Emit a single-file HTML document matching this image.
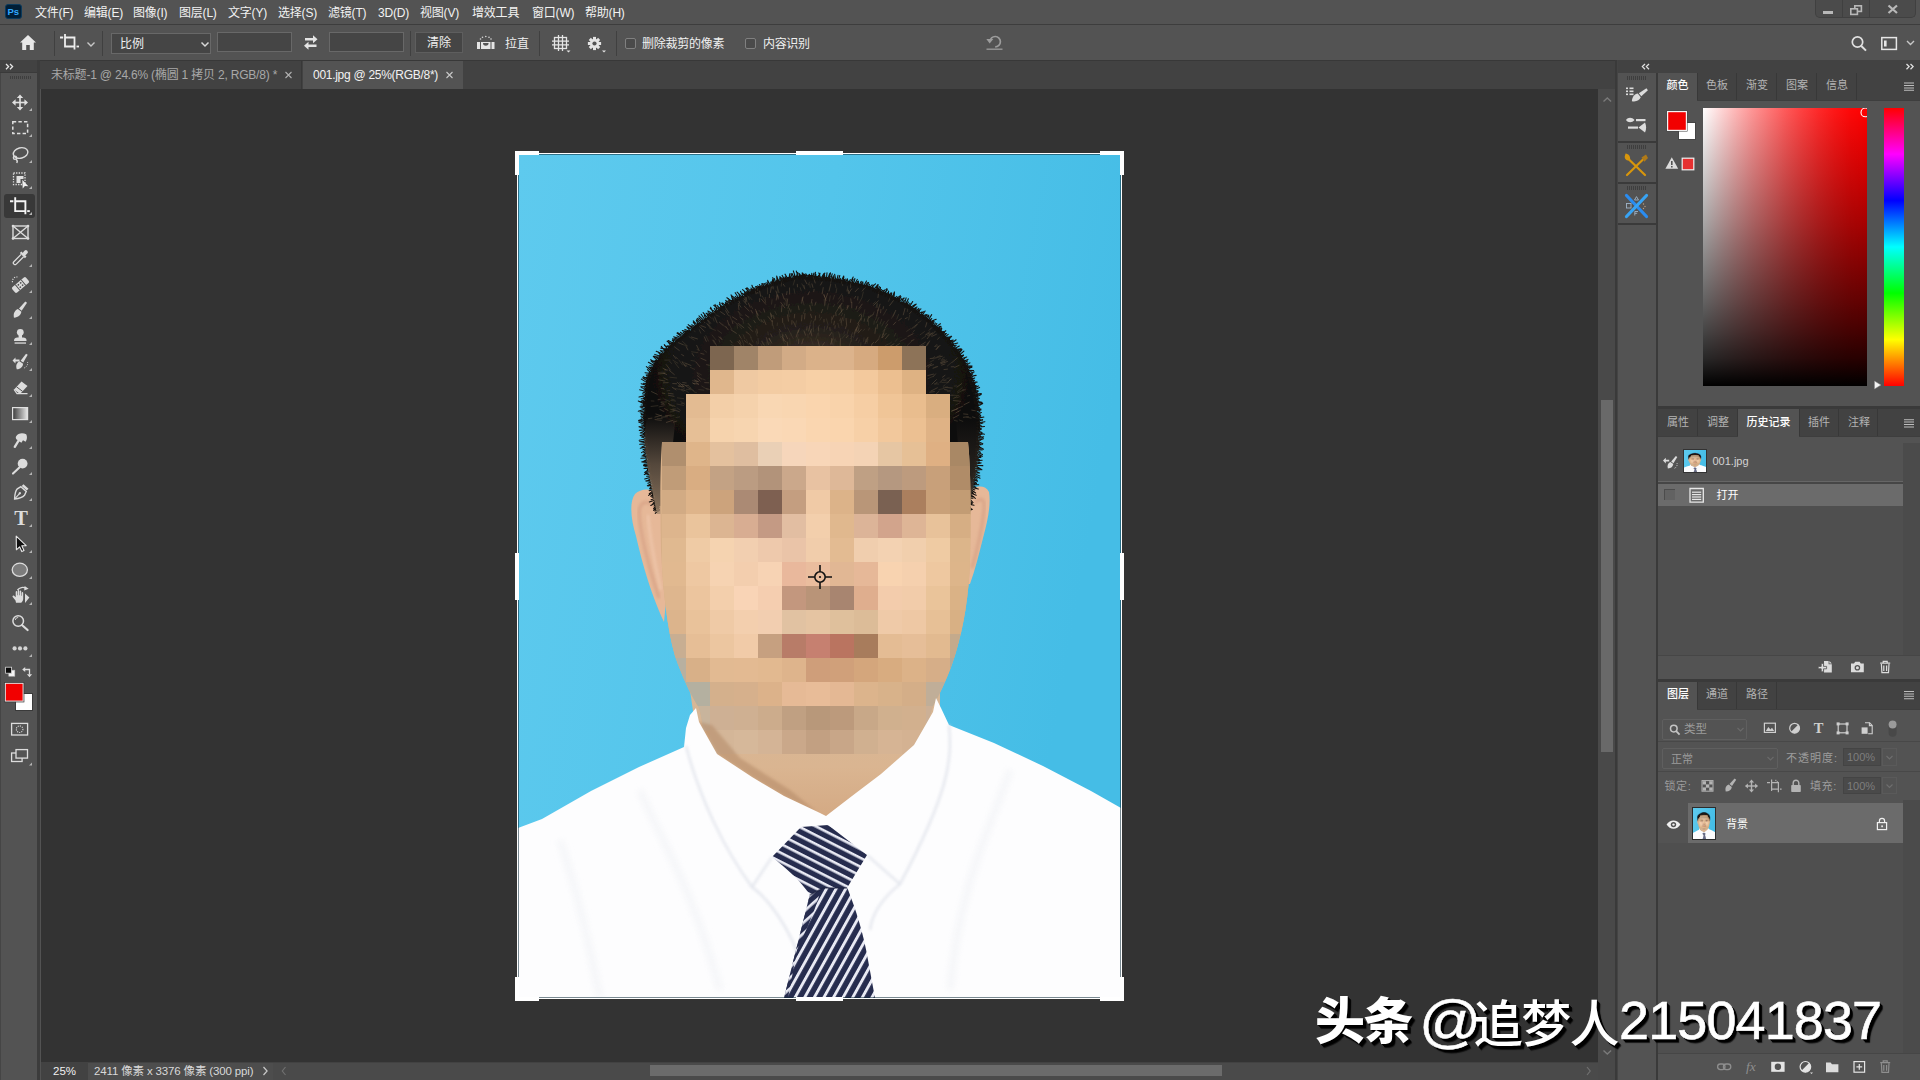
<!DOCTYPE html>
<html lang="zh-CN">
<head>
<meta charset="utf-8">
<title>Photoshop</title>
<style>
*{box-sizing:border-box;margin:0;padding:0}
html,body{width:1920px;height:1080px;overflow:hidden;background:#535353}
body{position:relative;font-family:"Liberation Sans","Noto Sans CJK SC",sans-serif;font-size:12px;color:#e6e6e6}
.abs{position:absolute}
.t{position:absolute;white-space:nowrap;line-height:16px;height:16px}
svg{position:absolute;overflow:visible}
#menubar{left:0;top:0;width:1920px;height:25px;background:#535353;border-bottom:1px solid #3d3d3d}
#menubar .t{top:4px;font-size:12px;color:#f2f2f2}
#optbar{left:0;top:25px;width:1920px;height:35px;background:#535353}
#optbar .t{font-size:12px;color:#f0f0f0}
.inp{position:absolute;background:#454545;border:1px solid #686868}
.sep{position:absolute;width:1px;background:#404040}
.cb{position:absolute;width:11px;height:11px;border:1px solid #808080;border-radius:2px;background:#4a4a4a}
#tabbar{left:40px;top:60px;width:1577px;height:29px;background:#424242;border-top:1px solid #383838}
#tabbar .t{font-size:12px;top:7px}
#toolbar{left:0;top:60px;width:40px;height:1020px;background:#535353;border-right:3px solid #3c3c3c;border-left:1px solid #454545}
#canvas{left:41px;top:89px;width:1557px;height:973px;background:#333333;overflow:hidden}
#status{left:41px;top:1062px;width:1576px;height:18px;background:#424242}
#vscroll{left:1598px;top:89px;width:18px;height:991px;background:#494949}
#rstrip{left:1617px;top:60px;width:41px;height:1020px;background:#535353}
#rpanels{left:1658px;top:60px;width:262px;height:1020px;background:#535353}
</style>
</head>
<body>

<svg width="0" height="0" style="position:absolute">
<defs>
<linearGradient id="bgblue" x1="0" y1="0" x2="1" y2="0.25">
 <stop offset="0" stop-color="#5ecaee"/><stop offset="0.5" stop-color="#53c5eb"/><stop offset="1" stop-color="#45bde6"/>
</linearGradient>
<radialGradient id="hairg" cx="0.5" cy="0.42" r="0.5">
 <stop offset="0" stop-color="#4a3c2e"/><stop offset="0.4" stop-color="#241f1a"/><stop offset="1" stop-color="#0f0f0f"/>
</radialGradient>
<linearGradient id="neckg" x1="0" y1="0" x2="0" y2="1">
 <stop offset="0" stop-color="#d6b797"/><stop offset="0.55" stop-color="#dab591"/><stop offset="1" stop-color="#d2a680"/>
</linearGradient>
<filter id="rough" x="-5%" y="-5%" width="110%" height="110%">
 <feTurbulence type="fractalNoise" baseFrequency="0.35" numOctaves="2" seed="3" result="n"/>
 <feDisplacementMap in="SourceGraphic" in2="n" scale="5" xChannelSelector="R" yChannelSelector="G"/>
</filter>
<linearGradient id="sbfadeL" x1="0" y1="0" x2="0" y2="1"><stop offset="0" stop-color="#8a7460" stop-opacity="0"/><stop offset="0.5" stop-color="#8f7862" stop-opacity="0.55"/><stop offset="1" stop-color="#a98c70" stop-opacity="0.8"/></linearGradient>
<linearGradient id="sbfadeR" x1="0" y1="0" x2="0" y2="1"><stop offset="0" stop-color="#8a7460" stop-opacity="0"/><stop offset="0.6" stop-color="#7a6450" stop-opacity="0.25"/><stop offset="1" stop-color="#a98c70" stop-opacity="0.6"/></linearGradient>
<filter id="soft"><feGaussianBlur stdDeviation="1.6"/></filter>
<filter id="soft3"><feGaussianBlur stdDeviation="3"/></filter>
<pattern id="tieA" width="20" height="8.4" patternUnits="userSpaceOnUse" patternTransform="rotate(-61 820 900)">
 <rect width="20" height="8.4" fill="#262c4e"/><rect width="20" height="2.9" fill="#e9eaf4"/>
</pattern>
<pattern id="tieB" width="20" height="7.9" patternUnits="userSpaceOnUse" patternTransform="rotate(27 820 850)">
 <rect width="20" height="7.9" fill="#262c4e"/><rect width="20" height="2.6" fill="#e9eaf4"/>
</pattern>
<pattern id="tieC" width="20" height="8" patternUnits="userSpaceOnUse" patternTransform="rotate(-42 800 940)">
 <rect width="20" height="8" fill="#262c4e"/><rect width="20" height="2.7" fill="#e9eaf4"/>
</pattern>
<clipPath id="faceclip">
 <path d="M710,346 L926,346 L926,394 L950,394 L950,442 L968,442 C971,470 971,520 970,560 C969,595 964,625 956,652 C950,672 942,690 933,706 C929,716 926,735 922,754 L706,754 C704,735 702,718 699,708 C690,694 682,676 675,656 C667,628 663,590 661,550 C660,510 660,470 662,442 L686,442 L686,394 L710,394 Z"/>
</clipPath>
<symbol id="photo" viewBox="518 154 603 844" preserveAspectRatio="none">
 <rect x="518" y="154" width="603" height="844" fill="url(#bgblue)"/>
 <!-- neck -->
 <path d="M690,690 L940,690 L940,760 L830,830 L810,830 L700,760 Z" fill="url(#neckg)"/>
 <!-- ears -->
 <path d="M664,498 C656,488 642,487 635,494 C629,502 631,520 636,536 C641,558 650,592 664,622 L670,560 Z" fill="#e6b898"/>
 <path d="M655,508 C648,499 640,501 639,512 C640,532 648,566 659,598" fill="none" stroke="#cf957c" stroke-width="3" opacity="0.55" filter="url(#soft)"/>
 <path d="M648,515 C650,540 655,565 661,590" fill="none" stroke="#f3cdb4" stroke-width="2.5" opacity="0.7" filter="url(#soft)"/>
 <path d="M966,494 C974,485 985,484 989,492 C991,504 988,520 983,538 C979,554 975,570 970,584 L962,584 Z" fill="#e6b898"/>
 <path d="M975,503 C981,496 985,499 984,510 C982,528 978,548 972,568" fill="none" stroke="#cf957c" stroke-width="3" opacity="0.55" filter="url(#soft)"/>
 <!-- hair -->
 <g filter="url(#rough)">
 <path d="M657,512 C652,490 648,470 646,455 C643,430 642,405 646,382 C650,366 660,353 675,341 C692,327 714,311 738,297 C757,287 776,279 795,276 C815,274 840,278 866,285 C890,292 912,305 929,319 C945,332 958,348 968,366 C975,380 979,400 980,424 C980,445 977,470 972,492 L967,512 L960,470 L680,470 Z" fill="url(#hairg)"/>
 </g>
 <path d="M722.3,339.9L720.1,336.6M743.0,319.9L739.6,316.9M771.7,317.1L771.1,313.7M778.2,297.6L775.8,290.6M764.0,322.9L761.0,319.6M807.8,295.1L809.5,291.5M760.8,296.7L759.3,289.7M769.3,298.0L769.5,294.1M774.1,318.6L772.6,315.3M854.1,334.3L855.9,328.7M808.6,331.4L810.2,324.7M709.7,365.3L706.2,364.6M676.4,390.1L671.8,387.0M749.4,311.2L744.1,306.0M813.0,287.7L811.8,283.5M847.2,308.2L847.4,305.2M684.5,387.2L679.3,382.6M867.3,321.7L869.0,315.8M705.9,327.5L700.6,325.5M814.9,305.5L816.1,301.8M895.4,346.3L899.8,343.4M907.6,336.6L913.4,333.6M831.7,320.0L834.1,315.0M877.9,297.9L878.9,290.6M664.0,388.5L660.9,388.6M950.8,366.8L954.4,366.7M677.0,383.8L672.4,383.5M813.7,292.1L814.1,288.9M784.3,299.5L782.1,293.3M697.8,339.0L691.0,336.9M925.4,327.3L927.0,322.1M883.3,334.9L884.6,328.8M918.8,347.2L924.4,344.8M825.7,298.8L827.8,293.0M930.2,365.7L933.9,364.6M700.4,381.5L697.6,378.4M732.9,323.9L732.0,320.2M757.3,292.4L756.9,285.8M704.3,354.3L700.4,353.3M933.2,368.2L938.1,366.4M807.1,284.2L804.4,279.2M766.0,304.6L760.9,298.6M782.7,322.9L782.5,318.1M706.4,341.7L704.2,336.5M736.7,333.5L730.7,329.6M772.2,337.1L770.5,333.6M804.5,319.3L805.0,313.0M830.1,330.9L829.8,327.2M679.7,411.8L672.4,409.3M741.2,307.5L738.1,303.1M788.5,321.5L787.5,314.5M672.7,406.3L667.9,403.2M851.7,308.2L851.8,301.9M847.0,291.4L847.5,288.4M854.9,292.0L858.6,288.1M685.0,384.8L681.3,384.5M673.4,420.2L666.0,422.5M671.5,415.0L664.9,415.9M704.9,323.0L703.4,320.3M684.1,356.0L681.3,354.3M757.4,315.7L756.0,310.8M931.5,336.5L936.8,334.1M657.6,394.5L651.1,391.4M862.0,291.4L865.7,286.6M949.3,380.4L951.8,378.7M781.4,312.2L782.0,304.8M936.8,357.4L942.6,356.2M940.7,363.8L947.8,361.4M855.9,309.7L857.0,305.8M848.6,293.2L851.9,288.6M759.5,320.5L756.7,315.6M845.3,328.9L846.3,325.9M963.0,417.3L968.8,416.7M953.2,400.5L961.0,401.3M846.7,325.8L846.0,318.0M838.3,307.8L842.1,302.8M796.1,337.3L798.5,329.8M745.4,302.6L745.1,295.4M919.0,346.3L925.7,342.0M685.7,366.9L681.9,361.7M851.3,303.0L850.7,298.4M698.9,381.6L694.7,381.1M972.2,416.8L975.5,417.9M685.3,390.7L681.2,389.3M858.8,308.6L862.4,303.8M674.4,396.4L667.9,395.2M771.9,343.4L768.9,338.3M935.8,349.8L940.3,345.1M954.3,367.6L959.4,365.2M822.4,345.6L824.7,342.2M697.9,381.6L693.9,379.7M783.7,341.4L782.3,334.2M772.3,325.7L772.3,320.1M953.3,398.4L957.2,396.7M820.3,285.4L822.3,281.7M857.5,331.6L858.9,328.5M732.4,343.2L730.1,340.2M781.0,332.0L779.3,329.1M926.4,366.4L931.9,363.5M885.2,339.0L889.0,334.3M753.5,346.7L749.3,343.0M746.9,304.8L743.2,300.4M715.2,313.2L710.0,308.7M665.2,393.6L662.0,393.0M903.2,315.2L905.1,308.1M776.2,300.4L777.0,294.5M794.3,318.3L794.7,313.9M811.8,318.1L810.4,313.8M841.7,312.4L840.3,304.9M940.8,360.1L944.8,359.8M876.9,329.1L877.6,324.2M836.2,311.8L840.3,305.2M787.8,308.5L789.3,304.0M728.8,305.4L727.6,300.0M787.8,339.1L785.4,334.1M728.6,315.8L725.5,310.3M811.2,311.1L809.7,305.0M785.6,341.9L781.7,336.3M822.1,294.2L823.3,287.2M667.7,416.7L661.1,417.2M667.7,379.9L663.4,377.8M729.1,313.0L725.2,307.2M683.1,344.7L677.8,342.4M824.0,322.3L824.0,319.0M786.5,295.0L787.1,291.2M710.3,324.1L707.4,320.2M846.0,338.0L848.3,335.2M834.9,328.7L835.2,325.3M833.7,325.2L834.5,320.8M754.3,347.4L749.0,343.5M674.9,410.8L670.4,409.3M876.6,316.2L878.3,309.2M663.9,403.6L660.8,402.6M798.5,343.8L798.8,338.7M864.1,321.7L864.6,318.5M865.0,344.0L866.4,338.6M725.0,314.8L720.2,311.5M709.7,389.5L705.8,388.4M882.0,337.9L883.0,333.4M909.2,314.1L911.6,311.4M869.0,317.9L873.8,313.9M668.3,410.6L664.3,408.5M811.9,336.3L810.7,330.6M784.9,286.6L783.1,283.9M728.4,330.1L725.4,326.0M786.7,306.0L787.7,298.6M741.4,338.7L738.9,334.6M874.9,333.7L875.6,327.5M841.0,323.1L842.6,317.5M931.6,384.4L936.7,379.3M695.1,384.3L692.1,382.7M927.4,375.7L933.9,374.0M953.0,418.2L959.3,414.9M679.6,350.7L674.1,346.6M956.7,387.3L962.1,383.3M911.1,341.0L914.3,339.5M706.4,360.7L700.5,358.1M772.4,322.0L767.9,316.3M932.8,377.1L935.8,373.6M934.8,384.7L937.4,381.9M799.2,310.1L798.2,305.5M866.4,342.1L868.0,336.9M838.5,315.2L843.4,308.9M755.5,323.1L753.7,320.3M730.6,303.7L728.0,299.5M790.6,311.7L789.2,308.1M740.0,303.8L738.7,300.6M850.5,287.7L851.2,280.8M804.8,289.2L803.7,285.0M699.1,350.4L696.5,345.0M934.4,347.0L937.0,344.3M828.9,291.4L830.8,284.0M787.8,346.4L787.2,341.7M928.8,330.6L931.9,327.5M877.6,311.3L880.2,303.8M829.2,336.1L832.0,332.1M694.0,356.4L692.0,353.2M858.0,333.2L861.5,329.2M770.3,292.9L771.4,286.9M720.3,309.3L715.7,305.6M742.2,347.0L737.6,341.1M688.0,350.2L686.0,346.2M665.3,373.3L657.8,374.0M904.8,318.8L907.6,317.5M687.3,366.3L684.2,364.6M942.2,377.4L945.3,375.1M815.2,320.4L815.6,315.6M963.2,413.9L968.2,414.4M773.6,288.6L771.9,284.0M721.7,339.5L718.5,336.7M674.6,374.8L668.8,370.0M875.0,343.1L878.8,338.8M771.6,318.8L770.3,312.5M861.0,320.6L861.6,314.5M929.3,392.3L934.8,391.6M821.2,313.0L822.8,309.1M873.3,305.6L878.6,300.6M759.7,302.0L759.5,298.3M750.3,307.5L748.2,302.7M762.2,290.0L761.5,284.8M924.9,347.9L928.3,342.4M818.7,331.4L818.4,326.7M832.1,344.7L831.4,338.1M778.3,299.4L777.8,294.6M791.8,324.6L792.0,320.1M951.4,410.8L957.5,409.1M673.5,394.0L667.9,393.2M946.8,383.5L950.8,379.0M830.4,344.5L832.8,338.4M936.2,349.6L938.8,345.8M652.3,418.1L648.0,418.7M710.2,327.7L706.7,323.4M943.6,369.6L947.9,369.1M766.1,324.9L763.8,319.4M936.0,394.1L939.4,391.0M729.2,325.7L727.3,320.1M785.0,308.1L780.6,302.2M811.3,303.4L812.0,299.0M931.2,335.6L935.5,331.0M744.2,328.0L738.3,323.3M937.3,339.5L939.6,337.3M856.0,340.8L857.6,337.7M670.6,370.4L666.0,364.3M694.2,391.4L689.7,387.6M752.8,331.6L748.2,326.7M690.2,389.1L685.4,385.5M684.2,386.5L678.3,386.5M739.1,310.0L738.3,304.6M668.5,382.6L663.0,382.8M698.7,384.0L693.1,383.5M770.9,341.4L769.0,337.9M704.6,331.5L699.3,326.2M869.9,347.3L872.6,344.7M716.5,345.5L713.3,339.8M893.0,316.5L895.9,310.0M971.4,410.1L976.7,411.0M927.4,335.7L932.9,332.9M927.0,339.0L931.8,332.8M956.4,408.9L963.0,406.1M854.2,298.6L855.9,296.0M850.3,322.8L850.9,318.8M927.9,367.6L930.5,365.3M881.6,338.1L886.5,333.1M815.3,283.3L813.2,276.5M819.5,346.7L817.6,339.2M939.8,382.8L944.0,378.4M930.7,391.2L937.7,387.6M943.4,380.4L946.5,379.9M723.3,325.6L719.0,321.9M756.1,294.2L755.1,287.9M700.0,367.0L695.6,361.6M757.1,293.6L757.6,289.7M749.3,334.3L745.9,331.7M789.6,294.5L789.5,287.6M745.0,300.2L742.4,296.9M757.5,333.5L756.7,328.8M709.3,382.8L704.3,382.6M717.3,323.2L714.5,316.6M911.4,328.9L917.1,324.2M893.1,325.1L896.0,321.8M857.6,300.3L858.0,296.3M681.8,387.0L677.0,381.9M677.2,421.0L673.0,422.2M855.8,332.6L857.1,326.9M702.2,379.4L697.0,375.4M764.0,345.0L761.6,341.3M947.2,391.1L950.5,390.9M661.3,415.9L655.5,413.9M768.6,344.8L766.2,337.2M746.9,302.2L746.2,297.0M836.1,316.1L835.7,311.9M944.9,387.3L952.7,388.1M888.2,347.4L894.3,343.6M801.7,344.2L803.3,338.7M688.8,385.4L684.8,385.4M846.6,309.9L848.9,305.2M801.5,321.3L802.0,314.7M840.2,346.3L840.5,338.3M957.9,411.9L960.6,410.1M889.4,305.8L894.0,299.8M951.3,411.5L957.7,408.4M661.7,420.4L654.7,419.5M858.9,316.3L861.0,313.6M664.2,411.6L659.5,409.3M955.7,413.1L958.5,411.2M885.0,328.1L887.9,323.8M746.6,342.7L744.1,340.3M925.1,335.2L930.2,332.7M855.7,330.7L858.9,323.6M824.7,305.5L825.7,297.8M944.2,389.5L947.6,390.0M871.1,344.7L874.0,342.1M665.1,381.1L658.1,379.7M941.2,365.3L945.4,363.9M764.7,312.5L763.6,308.5M662.1,415.2L654.6,417.2M740.9,343.9L739.4,340.1M758.3,315.6L755.2,308.9M882.9,309.4L883.6,306.3M699.0,384.7L696.2,382.7M805.6,335.5L803.9,330.6M797.5,287.2L797.3,283.9M667.0,374.7L663.2,373.0M796.0,327.2L793.3,321.4M666.2,369.8L662.7,368.2M798.0,332.8L799.5,328.4M749.2,317.6L745.2,314.7M667.9,370.1L664.2,369.8M849.2,294.0L848.4,289.9M951.8,362.6L957.7,357.6M660.6,399.2L657.6,399.8M717.7,313.1L716.3,308.2M940.2,363.0L945.3,361.0M857.5,324.2L861.1,318.2M801.7,303.5L802.5,297.3M963.6,404.9L969.6,402.0M880.5,313.2L881.0,309.1M752.8,313.4L750.9,310.0M751.2,327.2L748.0,323.2M809.4,334.4L811.7,329.1M691.4,365.7L685.3,363.1M927.0,345.8L929.8,340.6M898.4,320.7L901.7,318.2M686.6,383.0L682.3,382.5M826.2,300.8L823.8,294.6M929.8,358.6L936.7,357.8M737.2,319.9L732.1,316.7M676.3,359.0L673.0,354.9M824.8,297.4L823.8,294.2M806.6,330.4L807.1,326.3M802.2,301.2L803.2,296.5M962.3,390.2L965.7,389.7" stroke="#6a5844" stroke-width="0.9" fill="none" opacity="0.55"/><path d="M878.6,338.8L880.3,334.5M741.9,328.9L738.6,325.0M699.6,350.5L696.7,349.4M833.1,307.0L834.9,304.1M967.0,396.1L970.1,395.3M908.5,320.3L909.8,314.6M664.6,405.7L658.7,407.0M868.4,330.5L869.7,327.6M696.9,392.8L693.8,391.7M813.4,322.3L815.0,319.0M953.9,420.3L957.8,421.2M808.1,285.4L809.6,281.8M824.6,306.3L824.2,299.0M848.5,294.1L847.3,286.2M765.9,302.3L761.8,295.5M752.8,309.2L751.0,305.7M666.8,401.9L660.6,402.1M695.1,369.6L690.0,367.2M704.2,390.2L698.4,389.5M707.1,352.5L704.2,350.3M836.0,288.0L835.2,284.1M946.6,378.4L949.6,377.9M917.5,323.3L921.3,320.7M758.6,344.1L758.0,337.9M888.3,301.7L891.5,295.2M894.2,336.5L896.0,332.9M674.9,406.1L668.7,404.0M684.0,398.7L677.0,397.8M940.2,362.5L946.8,359.8M725.9,327.5L722.6,324.3M810.1,324.2L811.4,320.2M777.1,326.0L777.5,322.6M711.0,323.4L707.8,319.7M818.9,336.3L818.4,332.4M812.2,306.0L812.1,302.3M771.5,304.5L772.1,299.4M708.6,341.4L705.6,335.2M849.0,346.8L851.1,340.2M853.4,337.9L855.1,332.9M774.6,308.0L775.2,304.1M929.8,335.2L932.5,332.9M829.4,301.6L830.3,295.5M819.8,320.4L821.8,316.9M921.4,339.1L925.9,336.1M695.4,331.7L690.3,328.2M957.1,392.1L962.5,387.4M678.3,359.4L675.7,356.6M858.8,303.6L862.3,297.0M882.5,331.8L886.3,328.3M701.7,375.0L696.7,372.3M662.6,418.7L656.8,418.4M773.6,289.4L769.8,284.5M804.9,289.3L801.7,283.5M813.2,329.1L813.4,321.2M753.2,342.5L750.4,337.0M686.8,345.4L682.2,341.2M938.5,389.7L944.5,388.4M926.2,334.0L930.2,331.3M785.5,328.9L783.6,323.0M684.5,403.0L681.0,403.8M670.1,401.7L663.4,398.7M683.6,391.4L679.0,388.8M877.1,308.0L877.3,303.5M839.3,321.2L840.8,317.8M779.2,292.9L777.1,286.9M688.7,392.7L685.4,390.3M912.6,332.5L914.9,329.9M839.8,337.8L839.7,333.9M654.3,401.1L650.8,400.9M684.9,404.4L680.5,401.4M658.3,405.6L650.7,406.5M796.5,341.3L798.4,334.4M795.5,325.8L796.5,320.5M674.8,400.1L671.2,399.0M734.3,346.3L730.5,344.1M762.7,347.2L760.5,343.2M665.5,372.2L658.0,372.4M833.5,339.7L832.8,332.9M942.0,358.7L944.7,357.1M801.3,291.1L800.1,287.3M819.3,318.1L819.6,314.5M680.6,385.6L677.6,385.4M841.2,316.1L842.7,312.9M843.2,301.9L842.4,294.8M781.2,286.5L782.0,279.0M813.3,345.1L810.7,337.7M934.9,346.6L937.9,345.8M722.0,333.5L717.4,330.1M850.9,337.0L852.8,332.2M744.7,347.4L743.0,344.2M786.3,301.6L784.1,298.1M757.3,336.5L755.4,330.7M906.4,331.5L910.8,328.5M906.9,345.8L912.5,340.4M831.6,323.4L831.5,316.4M684.1,405.5L676.6,404.0M830.6,283.7L831.4,278.1M774.0,329.4L772.9,324.8M941.4,382.5L949.3,382.1M863.0,317.2L864.9,309.4M933.9,383.7L939.1,384.1M957.4,393.0L964.1,389.6M737.6,328.7L736.9,323.3M676.3,408.9L672.5,408.9M885.1,345.7L888.8,343.9M813.6,331.9L813.4,328.2M826.1,330.0L828.0,325.4M767.6,294.3L767.4,286.9M851.4,341.9L851.4,334.3M738.7,325.3L733.1,320.8M784.9,305.2L783.9,302.3M677.0,378.0L669.5,377.2M679.5,389.4L672.9,388.0M946.3,395.5L953.5,395.3M896.7,319.4L898.7,314.1M784.3,336.9L782.6,333.6M876.0,323.2L879.1,317.1M770.6,343.6L768.4,341.6M791.4,336.2L790.9,333.2M872.8,304.2L875.7,301.6M932.1,358.8L935.0,356.2M751.6,338.2L749.3,334.0M839.1,308.8L842.3,303.1M698.2,352.7L691.1,351.7M793.1,285.4L795.2,278.4M879.9,324.4L881.8,318.9M804.1,305.3L802.9,300.7M691.4,389.8L686.0,389.3M680.0,416.8L675.6,417.6M778.1,293.2L777.3,285.8M915.3,321.2L917.8,319.3M690.9,387.8L688.1,385.6M867.0,343.8L868.1,338.7M836.1,341.9L835.3,338.4M678.2,363.4L672.6,360.1M765.4,347.1L762.0,340.5M839.1,328.1L837.8,322.9M838.4,299.4L842.0,293.6M858.1,331.9L859.4,325.1M731.5,320.1L729.5,314.9M748.4,344.7L746.3,339.3M780.6,338.0L779.1,330.8M740.4,316.1L738.5,311.4M843.8,334.3L844.5,331.3M842.8,286.1L841.3,280.2M827.4,309.7L828.5,303.5M742.2,315.8L737.7,311.0M862.7,331.1L865.1,328.8M790.7,333.6L787.5,327.6M947.0,366.3L952.2,361.9M881.6,326.3L884.5,321.1M694.6,340.3L688.8,336.6M695.2,361.2L690.6,360.4M808.2,337.8L807.7,333.9M810.3,287.8L809.6,283.7M885.5,324.3L888.8,319.6M670.4,360.1L664.3,360.1M914.0,328.3L918.0,323.9M714.9,343.8L712.3,339.7M757.3,344.6L756.6,341.2M875.9,307.9L877.3,303.2M794.9,293.7L793.9,288.4M789.3,316.9L788.1,309.9M675.7,406.6L669.0,405.0M670.1,390.5L666.7,390.8M676.1,401.1L670.3,400.3M776.6,314.8L774.7,310.9M841.7,338.9L845.5,334.5M942.8,386.7L945.4,384.6M665.1,404.3L660.9,404.4M889.0,344.2L891.8,341.9M743.8,344.6L741.8,339.5M714.2,321.6L712.8,317.7M680.7,410.5L676.8,407.7M761.3,312.9L758.7,310.0M818.1,327.9L819.6,324.8M719.7,342.3L718.8,339.2M785.1,344.3L781.7,338.5M867.4,302.1L869.5,299.4M766.9,345.6L767.0,339.2M679.1,368.2L674.5,362.3M936.1,357.5L940.7,355.1M943.1,387.5L948.0,386.9M956.7,397.8L959.9,396.7M711.5,318.3L708.4,315.5M862.1,297.0L863.4,291.7M836.0,293.1L836.8,288.3M875.2,320.4L877.2,315.2M929.7,362.3L934.2,359.8M671.8,363.8L669.4,361.0M833.7,345.7L834.5,339.0M699.4,375.7L696.9,372.8M758.4,293.4L756.2,290.1M687.1,364.3L682.0,361.5M749.5,299.8L747.9,295.7M715.8,330.5L709.2,327.8M833.0,299.7L834.6,294.9M708.1,390.0L701.4,385.9M891.5,318.6L895.0,311.8M927.6,378.9L933.4,376.2M932.4,368.4L936.9,366.3M883.2,315.5L886.9,309.0M790.8,312.6L791.3,309.4M938.1,359.6L940.9,358.1M790.2,344.7L789.6,338.1M774.3,318.9L773.5,314.9M958.9,419.8L963.2,421.5M895.1,341.7L897.6,338.6M837.3,303.7L841.4,298.4M966.2,417.1L971.5,418.2M842.0,325.8L840.3,318.8M743.5,323.6L742.7,318.3M872.8,315.0L874.3,311.6M765.3,303.1L765.3,296.9M815.6,339.7L818.0,332.6M827.3,328.8L827.4,325.7M858.2,342.9L859.6,339.6M828.1,324.9L826.3,318.5M768.3,335.2L767.8,331.5M856.9,311.9L861.4,307.1M953.8,386.2L956.9,385.8M951.3,395.1L959.3,395.6M700.9,333.5L699.1,329.3M719.6,316.6L715.7,314.8M786.1,304.8L786.1,298.0M674.0,411.4L669.8,412.0M867.5,319.8L870.8,314.8M770.9,345.3L767.0,341.5M745.0,339.1L742.9,334.3M687.8,346.1L681.7,344.2M860.5,345.9L861.0,342.4M761.8,322.4L758.8,319.4M899.7,341.5L906.7,338.0M868.6,325.7L868.5,320.4M824.0,332.1L824.7,326.1M682.7,365.3L678.8,359.9M752.1,299.9L749.4,296.7M793.5,339.0L790.3,333.0M803.2,314.0L805.2,308.9M850.0,339.0L852.6,336.0M846.8,335.2L848.4,329.6M843.4,321.2L844.6,313.9M716.2,340.1L711.8,334.7M664.6,389.4L661.0,388.0M761.8,322.3L761.1,319.1M955.5,405.0L960.1,402.7M705.5,380.1L702.4,378.8M674.5,415.3L669.8,416.4M919.8,335.0L924.8,331.4M712.2,329.2L707.9,323.4M839.8,337.2L838.6,331.6M907.2,312.1L907.8,308.6M684.8,389.0L681.1,386.8M873.8,324.6L874.4,320.6M731.8,329.5L729.2,324.0M863.5,341.6L864.1,337.5M696.6,382.3L692.2,380.3" stroke="#3c342a" stroke-width="1" fill="none" opacity="0.7"/><path d="M659.4,510.2L655.3,513.3M659.5,509.5L655.0,511.1M659.1,507.8L653.6,510.3M658.0,505.3L653.7,510.3M657.6,503.8L653.6,508.6M657.4,502.4L654.1,506.0M657.6,501.8L650.8,505.5M656.8,499.7L652.9,503.4M657.2,499.4L649.3,501.9M656.8,497.8L651.1,499.8M656.7,497.4L652.0,497.3M656.3,495.7L650.7,496.1M655.3,492.5L651.5,495.7M655.2,491.4L648.6,495.4M654.7,489.6L649.3,493.8M654.9,489.3L649.1,490.7M654.6,487.6L650.0,489.0M653.6,484.9L649.7,488.5M654.0,484.9L647.9,485.9M653.4,482.4L647.4,485.7M653.3,481.3L647.9,483.2M653.2,480.7L645.9,480.9M652.4,477.7L646.6,481.1M652.4,476.9L644.7,479.0M652.2,475.9L646.6,476.3M651.9,475.1L647.0,474.3M651.5,472.1L644.3,474.6M650.8,469.9L645.4,473.4M650.4,468.2L644.7,472.5M650.8,468.5L644.0,468.5M650.6,467.3L644.9,466.7M650.4,465.4L643.5,465.6M650.2,463.6L643.9,464.4M650.0,462.8L641.8,461.9M649.7,460.4L642.7,461.9M649.1,457.9L643.0,461.8M649.4,457.9L640.9,458.2M649.2,456.9L643.6,456.2M648.9,454.3L642.0,456.0M648.3,451.8L643.0,455.2M648.4,450.6L643.8,452.7M648.0,448.8L641.5,452.6M648.0,447.5L643.0,449.8M648.0,446.6L640.2,448.2M647.5,444.3L641.9,447.1M647.7,443.9L639.7,444.3M647.4,443.1L639.7,441.5M647.2,440.2L641.3,441.8M647.1,438.8L639.2,440.3M646.7,438.9L642.0,437.1M646.6,435.3L641.5,437.0M646.5,433.9L640.2,435.6M646.4,433.3L640.8,433.0M645.9,430.2L640.3,433.0M646.0,429.6L639.3,430.4M645.7,429.7L639.1,426.7M646.0,427.0L639.0,426.7M645.9,425.9L641.3,425.0M645.8,424.9L638.7,422.0M645.8,423.3L638.6,420.4M646.0,420.5L639.9,420.8M645.9,418.2L639.1,420.2M645.8,416.6L641.3,418.1M646.0,415.4L640.9,416.3M646.0,414.2L641.3,414.5M645.8,411.8L641.0,413.5M645.9,410.5L640.1,412.0M645.9,408.8L638.2,411.2M645.9,408.8L641.0,407.6M646.0,406.3L640.1,406.8M646.0,405.1L641.0,405.0M645.9,404.8L638.3,401.0M646.4,402.3L640.0,401.5M646.5,399.8L641.7,400.8M646.8,399.0L641.2,398.8M646.6,398.7L642.1,396.3M647.1,395.1L639.0,397.0M647.3,395.0L642.4,393.8M647.5,393.5L643.0,392.3M647.7,392.0L639.6,389.8M647.5,391.3L641.4,387.4M648.2,388.2L642.2,388.0M648.4,386.5L640.8,386.8M648.5,385.9L641.2,383.7M648.8,383.9L643.4,383.2M648.5,383.6L641.4,379.1M649.0,382.3L642.7,377.8M649.6,380.7L643.4,376.6M650.6,377.8L644.1,377.4M651.1,376.7L646.6,375.9M651.7,374.4L646.1,375.0M652.3,373.6L645.0,372.8M652.0,373.9L647.4,369.6M652.6,372.4L646.4,366.7M653.1,371.0L648.8,366.8M654.4,367.8L649.1,367.2M655.0,366.3L649.7,365.8M655.5,366.2L648.4,362.3M656.1,365.4L651.2,361.2M657.3,363.7L650.7,359.7M658.6,361.0L651.5,360.7M658.6,361.8L653.3,356.3M659.8,360.2L654.8,356.3M661.3,357.6L653.8,356.4M662.1,356.7L654.8,354.4M662.1,356.9L658.2,352.2M663.9,354.4L656.2,351.3M664.3,353.9L660.3,350.6M666.1,351.5L661.1,350.7M666.3,352.3L661.3,346.4M668.5,349.6L660.8,348.1M668.5,350.4L664.3,344.7M670.7,348.1L664.5,345.6M672.0,346.6L667.6,345.7M672.0,347.5L667.9,341.6M674.0,345.6L667.1,341.2M675.3,344.4L668.3,340.6M675.8,344.3L672.3,340.2M677.8,342.0L672.5,340.1M679.0,341.1L672.6,338.7M680.2,340.2L674.4,338.0M681.5,339.0L673.6,336.8M682.4,338.6L676.8,335.7M683.2,338.2L677.0,333.0M684.7,337.0L677.7,332.6M685.7,336.2L680.4,332.3M686.9,335.4L683.3,332.5M688.2,334.3L683.8,331.3M689.8,332.3L682.3,330.6M690.8,331.8L684.9,329.4M691.1,332.1L686.9,326.9M693.0,330.3L687.4,327.0M693.8,329.9L688.2,324.7M695.6,328.0L689.3,325.6M696.6,327.4L691.7,324.8M696.9,327.5L693.3,322.1M698.6,326.3L693.3,320.9M699.0,325.9L696.3,320.2M701.0,324.5L696.7,319.6M702.4,323.4L697.2,318.3M703.7,322.4L698.8,317.9M704.9,321.5L699.0,315.8M705.7,321.0L701.2,314.3M706.3,320.4L704.4,315.2M708.4,318.9L703.1,312.6M709.0,318.4L706.9,313.8M711.6,316.2L706.1,313.2M712.9,315.2L708.1,312.7M714.2,314.3L707.8,311.0M714.0,314.6L710.6,307.3M716.5,312.6L710.3,308.6M716.9,312.8L714.3,308.4M717.6,312.3L715.0,304.4M720.4,310.5L713.8,305.4M721.4,310.1L717.0,305.3M721.3,310.1L719.7,302.4M724.4,308.1L719.4,304.4M725.0,308.0L721.7,303.2M727.0,306.7L722.5,303.0M727.2,306.8L725.4,302.5M728.9,305.8L725.7,300.4M731.2,304.0L726.3,300.9M731.3,304.4L728.4,298.5M733.8,302.6L726.9,297.7M733.5,303.0L731.1,294.9M736.3,301.2L732.0,297.7M737.8,300.3L731.6,295.8M738.7,300.0L735.3,296.3M739.6,299.5L735.2,292.7M740.0,299.3L738.9,293.9M743.0,297.8L737.1,292.1M743.5,297.9L740.5,291.2M745.9,296.5L742.4,293.3M746.0,296.7L744.2,290.8M748.7,295.2L742.6,289.7M748.9,295.4L746.5,288.1M751.5,294.0L745.8,288.5M753.0,293.4L747.2,287.9M753.5,293.4L751.0,288.1M754.7,292.9L751.9,285.2M756.7,291.9L753.9,287.7M757.5,291.6L755.6,286.5M759.9,290.4L756.5,286.5M761.4,289.7L757.7,285.9M762.2,289.5L759.4,284.5M762.5,289.2L761.9,283.6M764.5,288.5L762.9,283.5M766.3,287.7L764.3,283.6M768.0,287.1L765.7,283.2M768.2,287.1L767.7,280.4M771.1,286.2L767.7,280.8M770.6,286.2L771.2,281.3M772.4,285.7L772.6,279.5M774.8,285.2L772.8,277.6M776.5,284.7L774.3,278.5M777.2,284.4L776.7,276.0M779.6,283.8L776.8,276.4M780.1,283.5L779.9,276.5M782.3,282.9L780.7,277.3M784.7,282.1L781.9,277.9M786.1,281.7L782.1,275.4M787.1,281.5L785.2,276.7M789.0,280.8L785.0,274.1M788.5,280.7L789.8,273.7M791.5,280.2L789.7,275.0M792.9,279.8L791.0,273.7M794.7,279.2L792.1,273.5M796.0,278.8L793.3,270.9M795.5,278.9L797.7,272.6M798.9,279.0L796.3,271.1M800.2,279.2L798.8,273.4M802.5,278.9L799.5,273.7M802.8,279.4L802.2,272.9M804.9,279.3L802.9,273.2M806.9,279.2L804.3,274.3M808.2,279.4L805.8,273.8M809.8,279.5L807.8,275.3M810.6,279.8L809.5,274.4M811.3,279.9L811.8,273.3M812.3,279.9L813.9,273.0M813.9,280.0L815.5,272.2M816.2,280.2L815.8,274.4M816.1,279.9L818.5,275.4M818.3,280.2L820.0,273.4M821.5,280.2L818.8,272.9M820.8,280.2L823.6,273.8M822.7,280.5L824.8,273.0M825.7,280.6L824.1,274.2M826.2,280.7L827.0,272.9M826.9,280.6L829.8,273.4M828.9,280.9L830.5,272.9M830.1,280.9L832.2,273.9M832.8,281.3L832.3,276.7M834.6,281.6L833.5,275.7M836.2,281.9L834.6,274.2M836.4,282.1L838.0,275.3M837.8,282.4L839.8,275.5M839.6,282.8L840.4,278.3M840.3,282.8L843.7,276.1M842.6,283.4L843.9,276.9M843.6,283.5L845.3,279.1M844.9,283.8L847.3,278.8M848.2,284.3L847.4,278.8M847.9,284.4L850.3,279.6M849.4,284.6L853.2,277.1M851.5,285.2L853.1,279.3M853.1,285.5L854.9,278.5M853.8,285.5L857.3,279.4M855.6,285.9L857.6,281.5M858.4,286.5L858.4,281.0M858.4,286.4L861.3,281.4M860.3,286.9L862.0,282.7M863.1,287.4L862.8,281.8M863.0,287.3L866.5,281.0M864.5,287.6L867.3,282.7M866.3,288.4L868.6,282.5M867.8,289.0L869.5,284.3M868.2,289.0L871.7,285.1M869.4,289.4L875.5,283.8M873.1,291.0L872.9,284.7M872.5,290.9L877.9,284.5M874.7,292.0L876.8,286.8M876.7,292.8L878.1,284.6M878.0,293.3L879.3,286.6M879.6,294.0L880.5,287.4M879.1,293.5L883.0,290.3M880.7,294.4L885.2,289.6M882.0,294.8L887.4,289.9M884.9,296.3L886.9,288.5M885.6,296.6L887.8,292.6M888.2,297.6L888.6,291.1M888.4,297.9L891.0,292.8M890.6,298.7L891.8,293.0M891.5,299.2L894.4,291.9M893.7,300.0L894.5,292.5M893.1,299.5L896.9,296.3M894.4,299.9L900.4,295.7M895.8,300.6L900.4,297.2M898.2,302.1L901.0,296.7M898.4,301.5L904.3,298.1M900.9,303.5L903.8,298.0M902.3,304.5L904.2,300.2M904.0,305.5L906.1,297.9M904.8,306.2L908.4,298.7M906.1,307.1L908.4,302.0M906.8,307.5L910.0,303.4M908.3,308.6L912.7,301.5M908.6,308.5L915.2,304.4M910.3,309.9L916.2,304.2M911.1,310.0L917.0,306.9M912.6,311.4L916.3,308.5M913.9,312.2L918.9,308.4M915.1,313.0L920.9,308.9M917.3,314.7L919.7,310.6M917.4,314.2L921.9,312.1M919.4,316.1L923.3,311.7M921.0,317.2L925.1,311.0M921.1,316.6L926.3,314.6M922.8,318.2L927.3,314.8M924.2,319.3L928.8,315.2M926.3,320.8L928.8,316.3M927.4,321.6L931.7,314.6M927.9,322.1L931.8,318.5M928.3,322.3L936.2,319.2M930.0,324.4L933.6,320.8M931.6,325.9L934.2,321.8M932.3,326.7L935.5,323.0M933.5,328.0L936.8,323.5M933.9,328.4L940.4,323.7M934.7,329.1L940.2,326.3M936.2,330.9L941.0,326.4M937.3,332.0L941.5,327.9M939.0,333.6L941.8,328.7M938.6,332.8L943.5,331.6M940.2,335.0L945.8,330.8M940.8,335.2L945.9,333.6M942.6,337.6L946.4,333.5M943.4,338.4L948.2,334.3M943.8,338.1L951.6,336.6M944.9,339.4L949.4,338.2M947.3,342.3L951.2,336.1M947.0,341.5L953.2,340.1M948.3,343.3L952.3,341.2M949.6,344.8L956.1,339.8M950.0,345.0L957.7,343.0M950.8,345.9L956.3,345.3M952.8,349.1L956.0,345.2M952.9,349.5L959.3,346.1M953.5,349.7L960.8,348.9M954.5,351.7L961.6,349.0M955.6,353.5L961.4,350.1M957.2,355.6L962.0,349.6M957.7,356.5L963.9,351.1M958.1,356.8L963.5,354.9M959.7,359.2L963.5,355.3M959.8,359.3L966.7,357.0M961.4,361.7L964.8,358.4M961.7,362.1L968.0,359.4M962.7,363.7L967.4,361.0M963.4,364.4L967.7,363.0M964.6,366.4L969.9,362.9M965.0,365.9L972.1,366.1M965.4,367.6L971.8,367.4M966.4,370.7L970.9,367.5M966.3,370.3L973.6,370.6M967.1,373.4L971.1,371.1M967.3,374.4L974.1,371.9M967.8,376.0L972.8,373.8M968.0,376.8L976.1,375.4M968.8,379.4L972.8,376.9M969.1,380.6L974.7,377.9M969.2,381.1L974.5,380.4M969.6,382.3L977.1,382.1M970.2,384.5L975.3,383.1M970.5,384.7L976.2,385.6M970.9,386.6L976.3,386.7M971.7,389.6L978.3,385.9M972.0,390.8L979.6,387.4M972.2,391.8L977.3,390.5M972.9,393.9L978.4,391.1M973.0,394.2L981.3,393.6M973.6,397.0L978.9,394.0M973.7,398.3L981.2,394.6M974.0,400.0L978.1,397.7M974.3,401.6L979.4,398.3M974.1,400.9L981.9,402.4M974.2,402.9L982.7,403.3M974.5,403.8L980.1,405.2M974.9,407.2L982.4,403.8M974.8,407.2L979.4,407.6M975.0,408.9L981.0,409.1M975.3,411.2L981.0,409.9M975.6,413.2L979.8,411.4M975.7,414.4L981.4,412.6M976.0,414.1L980.7,415.6M976.2,415.5L981.2,417.3M976.3,418.6L983.9,417.0M976.5,418.8L982.5,420.2M976.9,422.3L982.6,419.5M976.8,423.0L984.9,421.7M977.1,424.9L982.8,423.1M977.1,424.5L981.5,426.0M976.9,427.3L984.6,426.5M976.9,427.8L981.4,428.9M977.0,431.2L981.3,429.3M976.9,430.4L982.0,432.5M976.7,432.3L984.5,434.2M976.5,434.9L982.1,434.2M976.7,434.7L983.0,437.7M976.4,438.0L983.7,436.8M976.3,439.3L981.9,438.7M976.4,441.6L983.4,438.8M976.4,440.7L982.8,443.7M976.4,442.1L980.5,444.2M976.0,445.4L982.4,444.5M976.3,445.1L983.5,449.2M975.8,448.1L981.3,448.1M975.6,449.5L982.1,449.9M975.9,449.8L980.4,452.3M975.6,451.6L982.5,454.6M975.5,453.1L982.4,456.3M975.2,455.2L980.8,456.6M975.0,457.5L980.9,457.5M975.1,457.8L979.5,459.8M974.8,460.9L982.2,460.2M974.6,462.3L979.4,462.1M974.6,464.4L981.1,462.9M974.4,465.2L982.8,465.6M974.7,465.3L981.9,469.8M974.1,468.4L979.0,468.5M974.0,470.4L980.5,469.6M973.9,470.2L979.6,472.9M973.3,472.9L979.5,473.0M973.2,473.3L979.9,475.9M973.0,474.4L980.0,478.2M972.6,476.1L977.1,478.2M972.5,477.1L977.2,480.3M971.9,479.2L977.5,481.3M971.7,480.2L976.3,482.9M971.0,482.9L976.5,483.4M970.7,484.6L978.7,484.7M970.6,485.0L975.9,487.2M970.1,486.9L978.3,489.0M969.9,488.0L974.9,489.9M969.9,488.7L975.6,493.0M969.9,489.8L973.3,493.4M968.9,492.5L976.2,495.2M969.1,493.2L975.3,498.4M968.1,496.7L973.8,496.6M967.8,498.0L973.0,498.3M968.5,497.5L973.0,502.5M968.1,499.1L972.2,503.4M967.7,500.7L972.2,505.0M966.6,503.6L974.0,505.3M967.3,503.6L970.5,507.3M966.4,505.8L972.3,509.4M965.7,508.3L971.5,509.6M965.3,510.0L970.6,510.8" stroke="#15120f" stroke-width="1.1" fill="none" stroke-linecap="round"/>
 <path d="M647,415 L644,440 L646,455 L648,470 L652,490 L657,514 L666,514 L670,470 L676,415 Z" fill="url(#sbfadeL)"/>
 <path d="M977,420 L980,440 L977,470 L972,492 L968,520 L960,520 L960,470 L956,420 Z" fill="url(#sbfadeR)"/>
 <!-- face base -->
 <path d="M662,442 L968,442 C971,470 971,520 970,560 C969,595 964,625 956,652 C950,672 942,690 933,706 C929,716 926,735 922,754 L706,754 C704,735 702,718 699,708 C690,694 682,676 675,656 C667,628 663,590 661,550 C660,510 660,470 662,442 Z" fill="#d8b088"/>
 <!-- mosaic -->
 <g clip-path="url(#faceclip)">
 <rect x="710" y="346" width="24.5" height="24.5" fill="#7d6650"/>
<rect x="734" y="346" width="24.5" height="24.5" fill="#a08468"/>
<rect x="758" y="346" width="24.5" height="24.5" fill="#c09c7a"/>
<rect x="782" y="346" width="24.5" height="24.5" fill="#d2ab86"/>
<rect x="806" y="346" width="24.5" height="24.5" fill="#dbb28a"/>
<rect x="830" y="346" width="24.5" height="24.5" fill="#dcb38c"/>
<rect x="854" y="346" width="24.5" height="24.5" fill="#d6aa80"/>
<rect x="878" y="346" width="24.5" height="24.5" fill="#cc9c6c"/>
<rect x="902" y="346" width="24.5" height="24.5" fill="#8d7358"/>
<rect x="710" y="370" width="24.5" height="24.5" fill="#e0b78d"/>
<rect x="734" y="370" width="24.5" height="24.5" fill="#efc9a2"/>
<rect x="758" y="370" width="24.5" height="24.5" fill="#f3cca3"/>
<rect x="782" y="370" width="24.5" height="24.5" fill="#f4cda4"/>
<rect x="806" y="370" width="24.5" height="24.5" fill="#f7d0a6"/>
<rect x="830" y="370" width="24.5" height="24.5" fill="#f6cfa5"/>
<rect x="854" y="370" width="24.5" height="24.5" fill="#f3c99d"/>
<rect x="878" y="370" width="24.5" height="24.5" fill="#ecbf90"/>
<rect x="902" y="370" width="24.5" height="24.5" fill="#deb283"/>
<rect x="686" y="394" width="24.5" height="24.5" fill="#e3bb92"/>
<rect x="710" y="394" width="24.5" height="24.5" fill="#f3cfa8"/>
<rect x="734" y="394" width="24.5" height="24.5" fill="#f5d2ac"/>
<rect x="758" y="394" width="24.5" height="24.5" fill="#f9d7b3"/>
<rect x="782" y="394" width="24.5" height="24.5" fill="#f9d6b1"/>
<rect x="806" y="394" width="24.5" height="24.5" fill="#fad5ae"/>
<rect x="830" y="394" width="24.5" height="24.5" fill="#f9d3ab"/>
<rect x="854" y="394" width="24.5" height="24.5" fill="#f6cea4"/>
<rect x="878" y="394" width="24.5" height="24.5" fill="#f0c597"/>
<rect x="902" y="394" width="24.5" height="24.5" fill="#e9bd8e"/>
<rect x="926" y="394" width="24.5" height="24.5" fill="#d9ae80"/>
<rect x="686" y="418" width="24.5" height="24.5" fill="#e6bf96"/>
<rect x="710" y="418" width="24.5" height="24.5" fill="#f6d3ad"/>
<rect x="734" y="418" width="24.5" height="24.5" fill="#f7d5b0"/>
<rect x="758" y="418" width="24.5" height="24.5" fill="#fad9b7"/>
<rect x="782" y="418" width="24.5" height="24.5" fill="#fad8b5"/>
<rect x="806" y="418" width="24.5" height="24.5" fill="#fad6b0"/>
<rect x="830" y="418" width="24.5" height="24.5" fill="#fad5ae"/>
<rect x="854" y="418" width="24.5" height="24.5" fill="#f7d0a7"/>
<rect x="878" y="418" width="24.5" height="24.5" fill="#f2c89c"/>
<rect x="902" y="418" width="24.5" height="24.5" fill="#ecc092"/>
<rect x="926" y="418" width="24.5" height="24.5" fill="#dfb285"/>
<rect x="662" y="442" width="24.5" height="24.5" fill="#b08f6e"/>
<rect x="686" y="442" width="24.5" height="24.5" fill="#dfb58a"/>
<rect x="710" y="442" width="24.5" height="24.5" fill="#e4c19e"/>
<rect x="734" y="442" width="24.5" height="24.5" fill="#dfbea0"/>
<rect x="758" y="442" width="24.5" height="24.5" fill="#ead0b6"/>
<rect x="782" y="442" width="24.5" height="24.5" fill="#f6d6bb"/>
<rect x="806" y="442" width="24.5" height="24.5" fill="#f8d6b8"/>
<rect x="830" y="442" width="24.5" height="24.5" fill="#f7d4b5"/>
<rect x="854" y="442" width="24.5" height="24.5" fill="#f4d3b5"/>
<rect x="878" y="442" width="24.5" height="24.5" fill="#e6c6a3"/>
<rect x="902" y="442" width="24.5" height="24.5" fill="#e6c096"/>
<rect x="926" y="442" width="24.5" height="24.5" fill="#dfb083"/>
<rect x="950" y="442" width="24.5" height="24.5" fill="#a98865"/>
<rect x="662" y="466" width="24.5" height="24.5" fill="#c09c78"/>
<rect x="686" y="466" width="24.5" height="24.5" fill="#d9ad82"/>
<rect x="710" y="466" width="24.5" height="24.5" fill="#c3a284"/>
<rect x="734" y="466" width="24.5" height="24.5" fill="#bb9c82"/>
<rect x="758" y="466" width="24.5" height="24.5" fill="#b2937a"/>
<rect x="782" y="466" width="24.5" height="24.5" fill="#cba88b"/>
<rect x="806" y="466" width="24.5" height="24.5" fill="#e8c2a2"/>
<rect x="830" y="466" width="24.5" height="24.5" fill="#deb898"/>
<rect x="854" y="466" width="24.5" height="24.5" fill="#bfa084"/>
<rect x="878" y="466" width="24.5" height="24.5" fill="#b59880"/>
<rect x="902" y="466" width="24.5" height="24.5" fill="#bd9b7e"/>
<rect x="926" y="466" width="24.5" height="24.5" fill="#c8a07a"/>
<rect x="950" y="466" width="24.5" height="24.5" fill="#b08c68"/>
<rect x="662" y="490" width="24.5" height="24.5" fill="#d2ab84"/>
<rect x="686" y="490" width="24.5" height="24.5" fill="#deb48a"/>
<rect x="710" y="490" width="24.5" height="24.5" fill="#cca37c"/>
<rect x="734" y="490" width="24.5" height="24.5" fill="#ab8a74"/>
<rect x="758" y="490" width="24.5" height="24.5" fill="#7e6051"/>
<rect x="782" y="490" width="24.5" height="24.5" fill="#c49e80"/>
<rect x="806" y="490" width="24.5" height="24.5" fill="#f0caa6"/>
<rect x="830" y="490" width="24.5" height="24.5" fill="#dcb389"/>
<rect x="854" y="490" width="24.5" height="24.5" fill="#b99678"/>
<rect x="878" y="490" width="24.5" height="24.5" fill="#7a6152"/>
<rect x="902" y="490" width="24.5" height="24.5" fill="#ab7f5e"/>
<rect x="926" y="490" width="24.5" height="24.5" fill="#c9a078"/>
<rect x="950" y="490" width="24.5" height="24.5" fill="#c29c74"/>
<rect x="662" y="514" width="24.5" height="24.5" fill="#ddb58d"/>
<rect x="686" y="514" width="24.5" height="24.5" fill="#eac49c"/>
<rect x="710" y="514" width="24.5" height="24.5" fill="#dcb592"/>
<rect x="734" y="514" width="24.5" height="24.5" fill="#d8ad92"/>
<rect x="758" y="514" width="24.5" height="24.5" fill="#c49a84"/>
<rect x="782" y="514" width="24.5" height="24.5" fill="#e2bea2"/>
<rect x="806" y="514" width="24.5" height="24.5" fill="#f3cfac"/>
<rect x="830" y="514" width="24.5" height="24.5" fill="#e0b88e"/>
<rect x="854" y="514" width="24.5" height="24.5" fill="#dcb498"/>
<rect x="878" y="514" width="24.5" height="24.5" fill="#d2a48c"/>
<rect x="902" y="514" width="24.5" height="24.5" fill="#deb596"/>
<rect x="926" y="514" width="24.5" height="24.5" fill="#e8c29a"/>
<rect x="950" y="514" width="24.5" height="24.5" fill="#d6ae84"/>
<rect x="662" y="538" width="24.5" height="24.5" fill="#e0b990"/>
<rect x="686" y="538" width="24.5" height="24.5" fill="#efcba5"/>
<rect x="710" y="538" width="24.5" height="24.5" fill="#f5d3b0"/>
<rect x="734" y="538" width="24.5" height="24.5" fill="#f2cfb0"/>
<rect x="758" y="538" width="24.5" height="24.5" fill="#eec9ac"/>
<rect x="782" y="538" width="24.5" height="24.5" fill="#eac4a8"/>
<rect x="806" y="538" width="24.5" height="24.5" fill="#f1cdab"/>
<rect x="830" y="538" width="24.5" height="24.5" fill="#e3bb92"/>
<rect x="854" y="538" width="24.5" height="24.5" fill="#f0ceae"/>
<rect x="878" y="538" width="24.5" height="24.5" fill="#f3d2b2"/>
<rect x="902" y="538" width="24.5" height="24.5" fill="#f1cfad"/>
<rect x="926" y="538" width="24.5" height="24.5" fill="#efcba3"/>
<rect x="950" y="538" width="24.5" height="24.5" fill="#dcb58a"/>
<rect x="662" y="562" width="24.5" height="24.5" fill="#e1b990"/>
<rect x="686" y="562" width="24.5" height="24.5" fill="#eec8a2"/>
<rect x="710" y="562" width="24.5" height="24.5" fill="#f6d3b2"/>
<rect x="734" y="562" width="24.5" height="24.5" fill="#f3ceae"/>
<rect x="758" y="562" width="24.5" height="24.5" fill="#f7d3b4"/>
<rect x="782" y="562" width="24.5" height="24.5" fill="#e9b89c"/>
<rect x="806" y="562" width="24.5" height="24.5" fill="#eabd9e"/>
<rect x="830" y="562" width="24.5" height="24.5" fill="#e1b794"/>
<rect x="854" y="562" width="24.5" height="24.5" fill="#e6b898"/>
<rect x="878" y="562" width="24.5" height="24.5" fill="#f8d3b0"/>
<rect x="902" y="562" width="24.5" height="24.5" fill="#f5d0ae"/>
<rect x="926" y="562" width="24.5" height="24.5" fill="#eec8a0"/>
<rect x="950" y="562" width="24.5" height="24.5" fill="#ddb58a"/>
<rect x="662" y="586" width="24.5" height="24.5" fill="#deb68e"/>
<rect x="686" y="586" width="24.5" height="24.5" fill="#ecc59e"/>
<rect x="710" y="586" width="24.5" height="24.5" fill="#f3cfac"/>
<rect x="734" y="586" width="24.5" height="24.5" fill="#f9d4b6"/>
<rect x="758" y="586" width="24.5" height="24.5" fill="#f5ceb0"/>
<rect x="782" y="586" width="24.5" height="24.5" fill="#c3977e"/>
<rect x="806" y="586" width="24.5" height="24.5" fill="#b99478"/>
<rect x="830" y="586" width="24.5" height="24.5" fill="#a88570"/>
<rect x="854" y="586" width="24.5" height="24.5" fill="#dfae8e"/>
<rect x="878" y="586" width="24.5" height="24.5" fill="#f3ccac"/>
<rect x="902" y="586" width="24.5" height="24.5" fill="#f2ccaa"/>
<rect x="926" y="586" width="24.5" height="24.5" fill="#eac49a"/>
<rect x="950" y="586" width="24.5" height="24.5" fill="#dab286"/>
<rect x="662" y="610" width="24.5" height="24.5" fill="#dcb48c"/>
<rect x="686" y="610" width="24.5" height="24.5" fill="#e9c29a"/>
<rect x="710" y="610" width="24.5" height="24.5" fill="#efcaa6"/>
<rect x="734" y="610" width="24.5" height="24.5" fill="#f3cfae"/>
<rect x="758" y="610" width="24.5" height="24.5" fill="#f2ceb0"/>
<rect x="782" y="610" width="24.5" height="24.5" fill="#e1c2a2"/>
<rect x="806" y="610" width="24.5" height="24.5" fill="#e5c4a2"/>
<rect x="830" y="610" width="24.5" height="24.5" fill="#dfc09c"/>
<rect x="854" y="610" width="24.5" height="24.5" fill="#dcbc98"/>
<rect x="878" y="610" width="24.5" height="24.5" fill="#efcaa8"/>
<rect x="902" y="610" width="24.5" height="24.5" fill="#eec8a4"/>
<rect x="926" y="610" width="24.5" height="24.5" fill="#e7c096"/>
<rect x="950" y="610" width="24.5" height="24.5" fill="#d8b084"/>
<rect x="662" y="634" width="24.5" height="24.5" fill="#c8ae92"/>
<rect x="686" y="634" width="24.5" height="24.5" fill="#e6be96"/>
<rect x="710" y="634" width="24.5" height="24.5" fill="#ecc6a0"/>
<rect x="734" y="634" width="24.5" height="24.5" fill="#f1cba8"/>
<rect x="758" y="634" width="24.5" height="24.5" fill="#c6a080"/>
<rect x="782" y="634" width="24.5" height="24.5" fill="#b87c68"/>
<rect x="806" y="634" width="24.5" height="24.5" fill="#c68070"/>
<rect x="830" y="634" width="24.5" height="24.5" fill="#ba7460"/>
<rect x="854" y="634" width="24.5" height="24.5" fill="#a87c5c"/>
<rect x="878" y="634" width="24.5" height="24.5" fill="#e4bc94"/>
<rect x="902" y="634" width="24.5" height="24.5" fill="#e6be98"/>
<rect x="926" y="634" width="24.5" height="24.5" fill="#e2ba90"/>
<rect x="950" y="634" width="24.5" height="24.5" fill="#c4aa8c"/>
<rect x="662" y="658" width="24.5" height="24.5" fill="#b8b0a0"/>
<rect x="686" y="658" width="24.5" height="24.5" fill="#d8b088"/>
<rect x="710" y="658" width="24.5" height="24.5" fill="#e2ba92"/>
<rect x="734" y="658" width="24.5" height="24.5" fill="#e3ba92"/>
<rect x="758" y="658" width="24.5" height="24.5" fill="#e2b990"/>
<rect x="782" y="658" width="24.5" height="24.5" fill="#deb48c"/>
<rect x="806" y="658" width="24.5" height="24.5" fill="#cf9e7a"/>
<rect x="830" y="658" width="24.5" height="24.5" fill="#d0a07a"/>
<rect x="854" y="658" width="24.5" height="24.5" fill="#d4a67c"/>
<rect x="878" y="658" width="24.5" height="24.5" fill="#d8ac80"/>
<rect x="902" y="658" width="24.5" height="24.5" fill="#dcb288"/>
<rect x="926" y="658" width="24.5" height="24.5" fill="#d6ae88"/>
<rect x="950" y="658" width="24.5" height="24.5" fill="#b4aa98"/>
<rect x="686" y="682" width="24.5" height="24.5" fill="#b4b0a0"/>
<rect x="710" y="682" width="24.5" height="24.5" fill="#d4b08c"/>
<rect x="734" y="682" width="24.5" height="24.5" fill="#d6b08c"/>
<rect x="758" y="682" width="24.5" height="24.5" fill="#dcb28a"/>
<rect x="782" y="682" width="24.5" height="24.5" fill="#e6ba96"/>
<rect x="806" y="682" width="24.5" height="24.5" fill="#e8bc98"/>
<rect x="830" y="682" width="24.5" height="24.5" fill="#e4b894"/>
<rect x="854" y="682" width="24.5" height="24.5" fill="#dcb48c"/>
<rect x="878" y="682" width="24.5" height="24.5" fill="#d8b28a"/>
<rect x="902" y="682" width="24.5" height="24.5" fill="#d4ae88"/>
<rect x="926" y="682" width="24.5" height="24.5" fill="#c0ae98"/>
<rect x="686" y="706" width="24.5" height="24.5" fill="#c8b49c"/>
<rect x="710" y="706" width="24.5" height="24.5" fill="#ceb094"/>
<rect x="734" y="706" width="24.5" height="24.5" fill="#cfb092"/>
<rect x="758" y="706" width="24.5" height="24.5" fill="#ccac8c"/>
<rect x="782" y="706" width="24.5" height="24.5" fill="#c0a082"/>
<rect x="806" y="706" width="24.5" height="24.5" fill="#b8987a"/>
<rect x="830" y="706" width="24.5" height="24.5" fill="#bc9a7c"/>
<rect x="854" y="706" width="24.5" height="24.5" fill="#c8a888"/>
<rect x="878" y="706" width="24.5" height="24.5" fill="#d0b08e"/>
<rect x="902" y="706" width="24.5" height="24.5" fill="#d2b08e"/>
<rect x="926" y="706" width="24.5" height="24.5" fill="#ccb096"/>
<rect x="710" y="730" width="24.5" height="24.5" fill="#d4b698"/>
<rect x="734" y="730" width="24.5" height="24.5" fill="#d6b89a"/>
<rect x="758" y="730" width="24.5" height="24.5" fill="#d4b496"/>
<rect x="782" y="730" width="24.5" height="24.5" fill="#caa88a"/>
<rect x="806" y="730" width="24.5" height="24.5" fill="#c2a082"/>
<rect x="830" y="730" width="24.5" height="24.5" fill="#c8a688"/>
<rect x="854" y="730" width="24.5" height="24.5" fill="#d0b090"/>
<rect x="878" y="730" width="24.5" height="24.5" fill="#d6b494"/>
<rect x="902" y="730" width="24.5" height="24.5" fill="#d4b292"/>
 </g>
 <path d="M699,722 L717,754 L752,777 L784,796 L817,812 L790,790 L740,758 L712,725 Z" fill="#b48a68" opacity="0.55" filter="url(#soft)"/>
 <!-- shirt -->
 <path d="M518,998 L518,828 L542,819 L591,791 L639,767 L684,747 L686,728 L690,715 L696,708 L699,722 L717,754 L752,777 L784,796 L820,813 L826,816 L852,796 L881,774 L914,745 L933,712 L936,698 L941,708 L949,725 L994,743 L1043,766 L1091,791 L1121,808 L1121,998 Z" fill="#fdfdfe"/>
 <!-- shirt shading -->
 <g fill="none" stroke="#dfe2ea" stroke-width="2.2" filter="url(#soft)" opacity="0.9">
  <path d="M686,746 C700,800 725,850 752,887 L772,857"/>
  <path d="M949,725 C952,760 950,790 900,884 L867,855"/>
  <path d="M752,887 C770,900 790,930 800,960"/>
  <path d="M900,884 C880,900 872,915 870,930"/>
 </g>
 <g fill="none" stroke="#f3f4f7" stroke-width="7" filter="url(#soft3)" opacity="0.8">
  <path d="M640,790 C660,840 690,880 720,990"/>
  <path d="M1010,770 C990,830 960,880 950,990"/>
  <path d="M560,840 C580,900 590,950 600,998"/>
 </g>
 <!-- tie -->
 <path d="M810,894 L823,887 L847,887 C856,910 864,935 868,960 L875,998 L784,998 Z" fill="url(#tieA)"/>
 <path d="M810,894 L821,888 C816,910 806,930 797,950 L788,998 L784,998 Z" fill="url(#tieC)"/>
 <path d="M772,857 L801,827 L828,825 L867,855 L847,888 L823,888 L810,895 C800,880 786,868 772,857 Z" fill="url(#tieB)"/>
 <path d="M847,888 L823,888 L810,895" fill="none" stroke="#1a1f3c" stroke-width="1.5" opacity="0.6"/>
</symbol>
</defs>
</svg>
<div id="canvas" class="abs"></div>
<svg style="left:518px;top:154px" width="603" height="844"><use href="#photo" x="0" y="0" width="603" height="844"/></svg>
<!-- crop overlay -->
<svg style="left:0;top:0" width="1920" height="1080">
 <rect x="517.5" y="153.5" width="604" height="845" fill="none" stroke="#ffffff" stroke-width="1"/>
 <rect x="518.5" y="154.5" width="602" height="843" fill="none" stroke="#0d2a36" stroke-width="1" opacity="0.55"/>
 <g fill="#ffffff">
  <path d="M515,151 h24 v4 h-20 v20 h-4 z"/>
  <path d="M1124,151 h-24 v4 h20 v20 h4 z"/>
  <path d="M515,1001 h24 v-4 h-20 v-20 h-4 z"/>
  <path d="M1124,1001 h-24 v-4 h20 v-20 h4 z"/>
  <rect x="796" y="151" width="47" height="4"/>
  <rect x="796" y="997" width="47" height="4"/>
  <rect x="515" y="553" width="4" height="47"/>
  <rect x="1120" y="553" width="4" height="47"/>
 </g>
 <g stroke="#111" stroke-width="1.6" fill="none">
  <circle cx="820" cy="577" r="5.2"/>
  <path d="M820,565 v6.5 M820,582.5 v6.5 M808,577 h6.5 M825.5,577 h6.5"/>
 </g>
 <circle cx="820" cy="577" r="1.1" fill="#111"/>
</svg>
<div id="menubar" class="abs"></div>
<div id="optbar" class="abs"></div>
<div id="tabbar" class="abs"></div>
<div id="toolbar" class="abs"></div>
<div id="status" class="abs"></div>
<div id="vscroll" class="abs"></div>
<div id="rstrip" class="abs"></div>
<div id="rpanels" class="abs"></div>
<!-- menubar content -->
<div class="abs" style="left:5px;top:4px;width:17px;height:15px;border-radius:3px;background:#001e36;border:1px solid #0b3a5c"></div>
<div class="t" style="left:7.5px;top:4px;font-size:9.5px;font-weight:bold;color:#31a8ff;line-height:15px;letter-spacing:-0.2px">Ps</div>
<div id="menus">
<div class="t mi" style="left:35px">文件(F)</div>
<div class="t mi" style="left:84px">编辑(E)</div>
<div class="t mi" style="left:133px">图像(I)</div>
<div class="t mi" style="left:179px">图层(L)</div>
<div class="t mi" style="left:228px">文字(Y)</div>
<div class="t mi" style="left:278px">选择(S)</div>
<div class="t mi" style="left:328px">滤镜(T)</div>
<div class="t mi" style="left:378px">3D(D)</div>
<div class="t mi" style="left:420px">视图(V)</div>
<div class="t mi" style="left:472px">增效工具</div>
<div class="t mi" style="left:532px">窗口(W)</div>
<div class="t mi" style="left:585px">帮助(H)</div>
</div>
<style>.mi{top:5px;font-size:12px;color:#f2f2f2;letter-spacing:-0.2px}</style>
<!-- window buttons -->
<div class="abs" style="left:1815px;top:0;width:101px;height:18px;background:#4b4b4b;border:1px solid #404040;border-top:none;border-radius:0 0 5px 5px"></div>
<div class="abs" style="left:1842px;top:0;width:1px;height:18px;background:#404040"></div>
<div class="abs" style="left:1869px;top:0;width:1px;height:18px;background:#404040"></div>
<svg style="left:0;top:0" width="1920" height="24">
 <rect x="1823" y="11" width="10" height="3" fill="#b8b8b8"/>
 <g fill="none" stroke="#b8b8b8" stroke-width="1.6">
  <rect x="1854.8" y="5.8" width="6.6" height="5.6"/>
  <rect x="1850.8" y="8.8" width="6.6" height="5.6" fill="#4b4b4b"/>
 </g>
 <path d="M1888.5,5.5 L1897,13 M1897,5.5 L1888.5,13" stroke="#b8b8b8" stroke-width="2.2" fill="none"/>
</svg>
<!-- options bar content -->

<div class="sep" style="left:54px;top:31px;height:25px"></div>
<div class="sep" style="left:102px;top:31px;height:25px"></div>
<div class="inp" style="left:111px;top:33px;width:100px;height:21px"></div>
<div class="t" style="left:120px;top:36px;color:#f0f0f0">比例</div>
<div class="inp" style="left:217px;top:32px;width:75px;height:20px"></div>
<div class="inp" style="left:329px;top:32px;width:75px;height:20px"></div>
<div class="sep" style="left:410px;top:31px;height:25px"></div>
<div class="inp" style="left:415px;top:32px;width:48px;height:21px;border-color:#5e5e5e"></div>
<div class="t" style="left:427px;top:35px;color:#f0f0f0">清除</div>
<div class="t" style="left:505px;top:36px;color:#f0f0f0">拉直</div>
<div class="sep" style="left:539px;top:31px;height:25px"></div>
<div class="sep" style="left:616px;top:31px;height:25px"></div>
<div class="cb" style="left:625px;top:38px"></div>
<div class="t" style="left:642px;top:36px;color:#f0f0f0;letter-spacing:-0.25px">删除裁剪的像素</div>
<div class="cb" style="left:745px;top:38px"></div>
<div class="t" style="left:763px;top:36px;color:#f0f0f0;letter-spacing:-0.35px">内容识别</div>
<svg style="left:0;top:25px" width="1920" height="36">
 <!-- home -->
 <path d="M28,10 L36,17.5 h-2.2 v7.5 h-4 v-5 h-3.6 v5 h-4 v-7.5 H20 Z" fill="#e8e8e8"/>
 <!-- crop icon -->
 <g fill="none" stroke="#eeeeee" stroke-width="1.8">
  <path d="M60,12.5 h3.2 M65,9 v12.5 h9.5"/>
  <path d="M65,12.5 h9.5 v12"/>
  <path d="M76.5,21.5 h2.5"/>
 </g>
 <path d="M87.5,17.5 l3.5,3.5 l3.5,-3.5" fill="none" stroke="#c8c8c8" stroke-width="1.4"/>
 <!-- dropdown chevron -->
 <path d="M201.5,17.5 l3.5,3.5 l3.5,-3.5" fill="none" stroke="#d8d8d8" stroke-width="1.5"/>
 <!-- swap -->
 <g fill="#e4e4e4">
  <path d="M305,13.5 h8 v-2.8 l4.5,4 l-4.5,4 v-2.8 h-8 z" transform="translate(0,-0.5)"/>
  <path d="M316.5,20 h-8 v-2.8 l-4.5,4 l4.5,4 v-2.8 h8 z" transform="translate(0,-0.5)"/>
 </g>
 <!-- level (straighten) icon -->
 <g fill="#e4e4e4">
  <rect x="477" y="17" width="3" height="7"/><rect x="491.5" y="17" width="3" height="7"/>
  <path d="M481,17 h9.5 v7 h-9.5 z M483,18 a2.8,2.8 0 0 0 5.6,0 z" fill-rule="evenodd"/>
 </g>
 <g fill="#d8d8d8"><circle cx="480.5" cy="14" r="0.8"/><circle cx="482.5" cy="12.3" r="0.8"/><circle cx="485.8" cy="11.5" r="0.8"/><circle cx="489" cy="12.3" r="0.8"/><circle cx="491" cy="14" r="0.8"/></g>
 <!-- grid -->
 <g fill="none" stroke="#e4e4e4" stroke-width="1.3">
  <rect x="554.5" y="12.5" width="12" height="11"/>
  <path d="M558.5,10 v16 M562.5,10 v16 M552,16.2 h17 M552,19.8 h17"/>
 </g>
 <path d="M566.5,25.5 h4 l-2,2 z" fill="#e4e4e4"/>
 <!-- gear -->
 <g transform="translate(594.5,18.5)">
  <g fill="#e4e4e4">
   <circle r="4.6"/>
   <rect x="-1.5" y="-6.6" width="3" height="13.2"/>
   <rect x="-1.5" y="-6.6" width="3" height="13.2" transform="rotate(45)"/>
   <rect x="-1.5" y="-6.6" width="3" height="13.2" transform="rotate(90)"/>
   <rect x="-1.5" y="-6.6" width="3" height="13.2" transform="rotate(135)"/>
  </g>
  <circle r="2.1" fill="#535353"/>
 </g>
 <path d="M602,25.5 h4 l-2,2 z" fill="#e4e4e4"/>
 <!-- reset -->
 <g fill="none" stroke="#9c9c9c" stroke-width="1.7">
  <path d="M990,16.5 a5.2,5.2 0 1 1 5.2,5.4"/>
  <path d="M986.5,24.2 h16" stroke-width="1.3"/>
 </g>
 <path d="M986.3,14 l7,0 l-3.6,4.6 z" fill="#9c9c9c"/>
 <!-- search -->
 <g fill="none" stroke="#e0e0e0" stroke-width="1.7">
  <circle cx="1857.5" cy="17" r="5.2"/><path d="M1861.3,21 L1866,25.6" stroke-width="2"/>
 </g>
 <!-- workspace -->
 <g fill="none" stroke="#e6e6e6" stroke-width="1.5">
  <rect x="1881.8" y="12.6" width="14.6" height="11.8"/>
 </g>
 <rect x="1884" y="15.5" width="2.6" height="6" fill="#e6e6e6"/>
 <path d="M1907,16 l3.5,3.5 l3.5,-3.5" fill="none" stroke="#c8c8c8" stroke-width="1.4"/>
</svg>
<!-- tabs -->
<div class="abs" style="left:301px;top:61px;width:1px;height:28px;background:#383838"></div>
<div class="abs" style="left:303px;top:61px;width:160px;height:28px;background:#535353"></div>
<div class="t" style="left:51px;top:67px;color:#a8a8a8;letter-spacing:-0.2px">未标题-1 @ 24.6% (椭圆 1 拷贝 2, RGB/8) *</div>
<div class="t" style="left:313px;top:67px;color:#f2f2f2;letter-spacing:-0.28px">001.jpg @ 25%(RGB/8*)</div>
<svg style="left:0;top:60px" width="500" height="30">
 <path d="M285.5,12 l6,6 M291.5,12 l-6,6" stroke="#b0b0b0" stroke-width="1.1" fill="none"/>
 <path d="M446.5,12 l6,6 M452.5,12 l-6,6" stroke="#c8c8c8" stroke-width="1.1" fill="none"/>
</svg>
<!-- toolbar -->
<div class="abs" style="left:0;top:60px;width:37px;height:12px;background:#424242"></div><div class="abs" style="left:0;top:72px;width:37px;height:1px;background:#3a3a3a"></div>
<div class="abs" style="left:4px;top:194px;width:31px;height:24px;background:#383838;border-radius:3px"></div>
<svg style="left:0;top:0" width="42" height="1080">
 <g fill="none" stroke="#e8e8e8" stroke-width="1.3"><path d="M6,64 l2.6,2.6 l-2.6,2.6 M10,64 l2.6,2.6 l-2.6,2.6"/></g>
 <g fill="#3e3e3e"><rect x="10" y="76" width="1" height="3"/><rect x="12" y="76" width="1" height="3"/><rect x="14" y="76" width="1" height="3"/><rect x="16" y="76" width="1" height="3"/><rect x="18" y="76" width="1" height="3"/><rect x="20" y="76" width="1" height="3"/><rect x="22" y="76" width="1" height="3"/><rect x="24" y="76" width="1" height="3"/><rect x="26" y="76" width="1" height="3"/><rect x="28" y="76" width="1" height="3"/><rect x="30" y="76" width="1" height="3"/></g>
 <!-- corner triangles -->
 <g fill="#b4b4b4">
  <path d="M32,108 v3 h-3 z"/><path d="M32,134 v3 h-3 z"/><path d="M32,160 v3 h-3 z"/><path d="M32,186 v3 h-3 z"/><path d="M32,212 v3 h-3 z"/>
  <path d="M32,264 v3 h-3 z"/><path d="M32,290 v3 h-3 z"/><path d="M32,316 v3 h-3 z"/><path d="M32,342 v3 h-3 z"/><path d="M32,368 v3 h-3 z"/><path d="M32,394 v3 h-3 z"/>
  <path d="M32,420 v3 h-3 z"/><path d="M32,446 v3 h-3 z"/><path d="M32,472 v3 h-3 z"/><path d="M32,498 v3 h-3 z"/><path d="M32,524 v3 h-3 z"/><path d="M32,550 v3 h-3 z"/>
  <path d="M32,576 v3 h-3 z"/><path d="M32,602 v3 h-3 z"/><path d="M32,654 v3 h-3 z"/><path d="M32,762.5 v3 h-3 z"/>
 </g>
 <!-- move -->
 <g transform="translate(20,102.5)" fill="#e0e0e0">
  <rect x="-5.5" y="-0.8" width="11" height="1.6"/><rect x="-0.8" y="-5.5" width="1.6" height="11"/>
  <path d="M0,-8 l3.2,3.6 h-6.4 z M0,8 l3.2,-3.6 h-6.4 z M-8,0 l3.6,-3.2 v6.4 z M8,0 l-3.6,-3.2 v6.4 z"/>
 </g>
 <!-- marquee -->
 <rect x="12.8" y="121.8" width="14.8" height="11.6" fill="none" stroke="#e0e0e0" stroke-width="1.5" stroke-dasharray="3.4,2.2"/>
 <!-- lasso -->
 <g fill="none" stroke="#dcdcdc" stroke-width="1.4">
  <ellipse cx="20.6" cy="153" rx="7.4" ry="5.2" transform="rotate(-14 20.6 153)"/>
  <circle cx="15" cy="157.8" r="1.6"/>
  <path d="M15.8,159.2 c1.5,1 1.8,2.4 1,3.8"/>
 </g>
 <!-- object select -->
 <rect x="13.5" y="173" width="11.5" height="11.5" fill="none" stroke="#e0e0e0" stroke-width="1.3" stroke-dasharray="1.3,1.3"/>
 <path d="M16.5,176 h7 v3 h-3 v4 h-4 z" fill="#e0e0e0"/>
 <path d="M22.3,179.8 l0.4,8.6 l2.2,-2.4 l3.4,0.2 z" fill="#f0f0f0"/>
 <!-- crop (active) -->
 <g fill="none" stroke="#f4f4f4" stroke-width="1.9">
  <path d="M10,201.3 h3.4 M15.2,197.3 v13.8 h10.2"/>
  <path d="M15.2,201.3 h10.2 v13"/>
  <path d="M27.2,211.1 h2.6"/>
 </g>
 <!-- frame -->
 <g fill="none" stroke="#dcdcdc" stroke-width="1.4">
  <rect x="13" y="226" width="15" height="12.5"/><path d="M13,226 l15,12.5 M28,226 l-15,12.5"/>
 </g>
 <g fill="#dcdcdc"><circle cx="13" cy="226" r="1.3"/><circle cx="28" cy="226" r="1.3"/><circle cx="13" cy="238.5" r="1.3"/><circle cx="28" cy="238.5" r="1.3"/></g>
 <!-- eyedropper -->
 <g transform="translate(20,258) rotate(45)">
  <rect x="-1.9" y="-10.2" width="3.8" height="5.2" rx="1.6" fill="#dcdcdc"/>
  <rect x="-3.6" y="-5.6" width="7.2" height="2.2" fill="#dcdcdc"/>
  <path d="M-1.7,-3.4 v10.4 a1.7,1.7 0 0 0 3.4,0 v-10.4" fill="none" stroke="#dcdcdc" stroke-width="1.3"/>
 </g>
 <!-- healing -->
 <g transform="translate(20.5,285) rotate(-40)">
  <rect x="-9" y="-3.6" width="18" height="7.2" rx="1.6" fill="#dcdcdc"/>
  <rect x="-3.4" y="-3.6" width="6.8" height="7.2" fill="#535353" opacity="0.0"/>
  <path d="M-3.8,-3.6 v7.2 M3.8,-3.6 v7.2" stroke="#535353" stroke-width="1"/>
  <g fill="#535353"><circle cx="-1.5" cy="-1.5" r="0.9"/><circle cx="1.5" cy="-1.5" r="0.9"/><circle cx="-1.5" cy="1.5" r="0.9"/><circle cx="1.5" cy="1.5" r="0.9"/></g>
 </g>
 <path d="M17.5,277 a4.5,4.5 0 0 0 -5,5.5" fill="none" stroke="#dcdcdc" stroke-width="1.1" stroke-dasharray="1.2,1.2"/>
 <!-- brush -->
 <g transform="translate(20,310) rotate(38)">
  <path d="M-1.1,-10 h2.2 l0.6,9.5 h-3.4 z" fill="#dcdcdc"/>
  <path d="M-2.2,0.6 h4.4 c1.6,3 1.2,6.2 -2.2,9.2 c-3.4,-3 -3.8,-6.2 -2.2,-9.2 z" fill="#dcdcdc"/>
 </g>
 <!-- stamp -->
 <g fill="#dcdcdc">
  <circle cx="20.3" cy="332.3" r="3.4"/><rect x="18.6" y="334" width="3.4" height="4.2"/>
  <path d="M14,341 c0,-2.4 1.4,-3.4 3.4,-3.4 h5.8 c2,0 3.4,1 3.4,3.4 z"/>
  <rect x="14.6" y="342.4" width="11.4" height="1.3"/>
 </g>
 <!-- history brush -->
 <g transform="translate(21,363) rotate(34)">
  <path d="M-1,-10.5 h2 l0.6,8.8 h-3.2 z" fill="#dcdcdc"/>
  <path d="M-2.1,-0.6 h4.2 c1.5,2.8 1.1,5.6 -2.1,8.2 c-3.2,-2.6 -3.6,-5.4 -2.1,-8.2 z" fill="#dcdcdc"/>
 </g>
 <path d="M12.5,360.5 l3,-3 v2 h4 v2 h-4 v2 z" fill="#dcdcdc"/>
 <path d="M27.5,362 a5,5 0 0 1 -3.5,6" fill="none" stroke="#dcdcdc" stroke-width="1" stroke-dasharray="1,1.2"/>
 <!-- eraser -->
 <g>
  <path d="M21.5,381.5 l6,4.5 l-7.5,8 l-6,-4.5 z" fill="#dcdcdc"/>
  <path d="M16.5,386.8 l6,4.5" stroke="#535353" stroke-width="1"/>
  <path d="M14,389.5 l3,4.2 h10.5" fill="none" stroke="#dcdcdc" stroke-width="1.2"/>
 </g>
 <defs><linearGradient id="tg" x1="0" y1="0" x2="1" y2="0"><stop offset="0" stop-color="#3a3a3a"/><stop offset="1" stop-color="#e8e8e8"/></linearGradient></defs>
 <!-- gradient -->
 <rect x="12.6" y="407.6" width="15" height="12" fill="url(#tg)" stroke="#e0e0e0" stroke-width="1.2"/>
 <!-- smudge -->
 <g fill="#dcdcdc">
  <path d="M16,436.5 c2,-3.4 6.5,-4 10.2,-2.2 c1.2,2.4 1,5.2 -0.6,7.4 l-2.6,-1.4 l-1.6,2.4 l-2,-1.2 l-3.6,6 c-1,1.2 -2.8,0.2 -2,-1.2 l3.8,-6.2 c-1.6,-0.8 -2.2,-2.2 -1.6,-3.6 z"/>
 </g>
 <!-- dodge -->
 <circle cx="22.6" cy="463.6" r="4.9" fill="#dcdcdc"/>
 <path d="M19.4,467.4 L13,473.6" stroke="#dcdcdc" stroke-width="2.1" stroke-linecap="round"/>
 <!-- pen -->
 <g transform="translate(20.5,492.5) rotate(42)">
  <path d="M-3.6,-4.6 h7.2 l1.2,4 c0,3.4 -2.4,6.6 -4.8,9.4 c-2.4,-2.8 -4.8,-6 -4.8,-9.4 z" fill="none" stroke="#dcdcdc" stroke-width="1.4"/>
  <rect x="-3.4" y="-8.2" width="6.8" height="2.6" fill="#dcdcdc"/>
  <path d="M0,8 v-6.5" stroke="#dcdcdc" stroke-width="1.1"/><circle cx="0" cy="1" r="1.2" fill="#dcdcdc"/>
 </g>
 <text x="21" y="525" font-family="Liberation Serif, serif" font-weight="bold" font-size="20.5" fill="#dcdcdc" text-anchor="middle">T</text>
 <!-- path select arrow -->
 <path d="M16.2,536.2 l0.2,13.6 l3.2,-3 l2.2,4.8 l2.2,-1 l-2.2,-4.8 l4.4,-0.2 z" fill="#101010" stroke="#e8e8e8" stroke-width="1.1" stroke-linejoin="round"/>
 <!-- ellipse -->
 <ellipse cx="19.8" cy="569.8" rx="7.6" ry="6.6" fill="#7c7c7c" stroke="#dcdcdc" stroke-width="1.3"/>
 <!-- hand rotate -->
 <g fill="#dcdcdc">
  <path d="M15.5,600.5 l-2.8,-3.6 c-0.7,-1 0.6,-2 1.4,-1.2 l1.6,1.6 v-5.4 c0,-1.1 1.5,-1.1 1.5,0 v3.4 h0.5 v-4.6 c0,-1.1 1.5,-1.1 1.5,0 v4.6 h0.5 v-4 c0,-1.1 1.5,-1.1 1.5,0 v4.4 h0.5 v-2.8 c0,-1.1 1.5,-1.1 1.5,0 v5.6 c0,2 -1,3.4 -2,4.2 h-5.2 z"/>
  <path d="M25,603 l4.4,-5.5 l-4.4,-4 z"/>
 </g>
 <path d="M17.5,590 a6.5,6.5 0 0 1 8.5,-1.6" fill="none" stroke="#dcdcdc" stroke-width="1.3"/>
 <path d="M24.6,586 l4,2.8 l-4.4,1.8 z" fill="#dcdcdc"/>
 <!-- zoom -->
 <g fill="none" stroke="#dcdcdc"><circle cx="18.2" cy="621" r="5.3" stroke-width="1.5"/><path d="M22.2,625.2 L27.6,630" stroke-width="2.2" stroke-linecap="round"/><path d="M15.2,620 a3.2,3.2 0 0 1 3,-2.6" stroke-width="0.9"/></g>
 <!-- dots -->
 <g fill="#d4d4d4"><circle cx="14.6" cy="648.4" r="2.1"/><circle cx="20" cy="648.4" r="2.1"/><circle cx="25.4" cy="648.4" r="2.1"/></g>
 <!-- default colors -->
 <rect x="8.8" y="670.2" width="6" height="6" fill="#f4f4f4" stroke="#bdbdbd" stroke-width="0.6"/>
 <rect x="5.6" y="667.2" width="6" height="6" fill="#0a0a0a" stroke="#d8d8d8" stroke-width="0.8"/>
 <!-- swap colors -->
 <g fill="none" stroke="#dcdcdc" stroke-width="1.3"><path d="M24.5,669.5 h5 v5"/></g>
 <path d="M22.2,669.5 l3,-2.6 v5.2 z M29.5,677.2 l-2.6,-3 h5.2 z" fill="#dcdcdc"/>
 <!-- fg / bg -->
 <rect x="15.5" y="693.5" width="17" height="17" fill="#ffffff" stroke="#3a3a3a" stroke-width="1"/>
 <rect x="5.2" y="683.2" width="18" height="18" fill="#f20000" stroke="#e8e8e8" stroke-width="1.2"/>
 <rect x="4.4" y="682.4" width="19.6" height="19.6" fill="none" stroke="#3a3a3a" stroke-width="0.7"/>
 <!-- quick mask -->
 <rect x="11.6" y="723.4" width="16" height="11.6" fill="none" stroke="#dcdcdc" stroke-width="1.3"/>
 <circle cx="19.6" cy="729.2" r="3.3" fill="none" stroke="#dcdcdc" stroke-width="1.1" stroke-dasharray="1.1,1.1"/>
 <!-- screen mode -->
 <g fill="#535353" stroke="#dcdcdc" stroke-width="1.3"><rect x="11.6" y="753" width="10.5" height="8.5"/><rect x="16" y="749.6" width="11.5" height="8.5"/></g>
</svg>
<!-- status bar / scrollbars -->
<div class="abs" style="left:88px;top:1063px;width:185px;height:17px;background:#4d4d4d"></div>
<div class="abs" style="left:273px;top:1063px;width:1325px;height:17px;background:#4a4a4a"></div>
<div class="abs" style="left:650px;top:1065px;width:572px;height:11px;background:#6b6b6b"></div>
<div class="t" style="left:53px;top:1063px;color:#f0f0f0;font-size:11.5px">25%</div>
<div class="t" style="left:94px;top:1063px;color:#d8d8d8;font-size:11.5px;letter-spacing:-0.15px">2411 像素 x 3376 像素 (300 ppi)</div>
<svg style="left:0;top:1060px" width="1620" height="20">
 <path d="M263.5,7 l3.6,4 l-3.6,4" fill="none" stroke="#c8c8c8" stroke-width="1.2"/>
 <path d="M285.5,7 l-3.2,4 l3.2,4" fill="none" stroke="#707070" stroke-width="1.2"/>
 <path d="M1587,7 l3.2,4 l-3.2,4" fill="none" stroke="#707070" stroke-width="1.2"/>
</svg>
<div class="abs" style="left:1601px;top:400px;width:12px;height:352px;background:#696969"></div>
<!-- right strip + panels -->
<style>
.ptab{position:absolute;white-space:nowrap;font-size:11px;line-height:16px;height:16px;color:#b4b4b4}
.ptab.on{color:#ffffff;font-weight:500}
.tabrow{position:absolute;left:1658px;width:262px;height:28px;background:#424242;border-bottom:1px solid #3e3e3e}
.tabon{position:absolute;height:29px;background:#535353}
.tdiv{position:absolute;width:1px;height:27px;background:#383838}
.pt{position:absolute;white-space:nowrap;font-size:11px;line-height:16px;height:16px}
</style>
<div class="abs" style="left:1615px;top:60px;width:2px;height:1020px;background:#3a3a3a"></div><div class="abs" style="left:1617px;top:60px;width:1px;height:1020px;background:#444"></div>
<div class="abs" style="left:1656px;top:60px;width:2px;height:1020px;background:#3a3a3a"></div>
<div class="abs" style="left:1618px;top:60px;width:302px;height:13px;background:#424242"></div>
<div class="abs" style="left:1618px;top:141px;width:38px;height:2px;background:#3a3a3a"></div>
<div class="abs" style="left:1618px;top:182px;width:38px;height:2px;background:#3a3a3a"></div>
<div class="abs" style="left:1618px;top:223px;width:38px;height:2px;background:#3a3a3a"></div>
<div class="abs" style="left:1618px;top:225px;width:38px;height:855px;background:#535353"></div>

<!-- COLOR PANEL -->
<div class="tabrow" style="top:73px"></div>
<div class="tabon" style="left:1658px;top:73px;width:39px"></div>
<div class="tdiv" style="left:1697px;top:73px"></div><div class="tdiv" style="left:1736px;top:73px"></div><div class="tdiv" style="left:1776px;top:73px"></div><div class="tdiv" style="left:1816px;top:73px"></div><div class="tdiv" style="left:1856px;top:73px"></div>
<div class="ptab on" style="left:1666.5px;top:77px">颜色</div>
<div class="ptab" style="left:1706px;top:77px">色板</div>
<div class="ptab" style="left:1746px;top:77px">渐变</div>
<div class="ptab" style="left:1786px;top:77px">图案</div>
<div class="ptab" style="left:1826px;top:77px">信息</div>
<div class="abs" style="left:1703px;top:108px;width:164px;height:278px;background:linear-gradient(to bottom,rgba(0,0,0,0.000) 0%,rgba(0,0,0,0.081) 10%,rgba(0,0,0,0.163) 20%,rgba(0,0,0,0.248) 30%,rgba(0,0,0,0.335) 40%,rgba(0,0,0,0.426) 50%,rgba(0,0,0,0.520) 60%,rgba(0,0,0,0.618) 70%,rgba(0,0,0,0.724) 80%,rgba(0,0,0,0.842) 90%,rgba(0,0,0,1.000) 100%),linear-gradient(to right,rgb(255,255,255) 0%,rgb(255,218,218) 10%,rgb(255,182,182) 20%,rgb(255,149,149) 30%,rgb(255,119,119) 40%,rgb(255,90,90) 50%,rgb(255,65,65) 60%,rgb(255,42,42) 70%,rgb(255,23,23) 80%,rgb(255,8,8) 90%,rgb(255,0,0) 100%)"></div>
<div class="abs" style="left:1884px;top:108px;width:20px;height:278px;background:linear-gradient(to bottom,#ff0000 0%,#ff00ff 16.6%,#0000ff 33.3%,#00ffff 50%,#00ff00 66.6%,#ffff00 83.3%,#ff0000 100%)"></div>
<div class="abs" style="left:1658px;top:406px;width:262px;height:3px;background:#3a3a3a"></div>

<!-- HISTORY PANEL -->
<div class="tabrow" style="top:409px"></div>
<div class="tabon" style="left:1738px;top:409px;width:61px"></div>
<div class="tdiv" style="left:1697px;top:409px"></div><div class="tdiv" style="left:1737px;top:409px"></div><div class="tdiv" style="left:1799px;top:409px"></div><div class="tdiv" style="left:1838px;top:409px"></div><div class="tdiv" style="left:1877px;top:409px"></div>
<div class="ptab" style="left:1667px;top:414px">属性</div>
<div class="ptab" style="left:1707px;top:414px">调整</div>
<div class="ptab on" style="left:1746.5px;top:414px">历史记录</div>
<div class="ptab" style="left:1808px;top:414px">插件</div>
<div class="ptab" style="left:1848px;top:414px">注释</div>
<div class="abs" style="left:1658px;top:483px;width:262px;height:172px;background:#4f4f4f"></div>
<div class="abs" style="left:1903px;top:443px;width:17px;height:212px;background:#4b4b4b"></div>
<div class="abs" style="left:1658px;top:481px;width:245px;height:1px;background:#666"></div>
<div class="abs" style="left:1658px;top:482px;width:245px;height:2px;background:#464646"></div>
<div class="abs" style="left:1658px;top:484px;width:245px;height:22px;background:#6b6b6b"></div>
<div class="abs" style="left:1664px;top:489px;width:11px;height:11px;background:#626262;border-top:1px solid #4c4c4c;border-left:1px solid #4c4c4c"></div>
<svg style="left:1683px;top:449px" width="24" height="24"><rect x="0" y="0" width="24" height="24" fill="#333"/><use href="#photo" x="1" y="1" width="22" height="22"/></svg>
<div class="pt" style="left:1712.5px;top:453px;color:#d2d2d2">001.jpg</div>
<div class="pt" style="left:1716.5px;top:487px;color:#ffffff">打开</div>
<div class="abs" style="left:1658px;top:655px;width:262px;height:1px;background:#464646"></div>
<div class="abs" style="left:1658px;top:679px;width:262px;height:3px;background:#3a3a3a"></div>

<!-- LAYERS PANEL -->
<div class="tabrow" style="top:682px;height:28px"></div>
<div class="tabon" style="left:1658px;top:682px;width:39px;height:29px"></div>
<div class="tdiv" style="left:1697px;top:682px"></div><div class="tdiv" style="left:1736px;top:682px"></div><div class="tdiv" style="left:1776px;top:682px"></div>
<div class="ptab on" style="left:1667px;top:686px">图层</div>
<div class="ptab" style="left:1706px;top:686px">通道</div>
<div class="ptab" style="left:1746px;top:686px">路径</div>
<div class="abs" style="left:1662px;top:719px;width:85px;height:21px;border:1px solid #5f5f5f;border-radius:2px"></div>
<div class="pt" style="left:1684px;top:721px;color:#9c9c9c;font-size:11.5px">类型</div>
<div class="abs" style="left:1658px;top:741px;width:262px;height:1px;background:#484848"></div>
<div class="abs" style="left:1662px;top:748px;width:116px;height:21px;border:1px solid #5f5f5f;border-radius:2px"></div>
<div class="pt" style="left:1671px;top:751px;color:#9c9c9c">正常</div>
<div class="pt" style="left:1786px;top:750px;color:#9c9c9c;letter-spacing:1px">不透明度:</div>
<div class="abs" style="left:1843px;top:748px;width:38px;height:18px;background:#4a4a4a;border:1px solid #444"></div>
<div class="abs" style="left:1882px;top:748px;width:15px;height:18px;border:1px solid #5a5a5a"></div>
<div class="pt" style="left:1847px;top:749px;color:#7e7e7e">100%</div>
<div class="abs" style="left:1658px;top:771px;width:262px;height:1px;background:#484848"></div>
<div class="pt" style="left:1664.5px;top:778px;color:#9c9c9c;letter-spacing:0.6px">锁定:</div>
<div class="pt" style="left:1810px;top:778px;color:#9c9c9c;letter-spacing:0.6px">填充:</div>
<div class="abs" style="left:1843px;top:777px;width:38px;height:17px;background:#4a4a4a;border:1px solid #444"></div>
<div class="abs" style="left:1882px;top:777px;width:15px;height:17px;border:1px solid #5a5a5a"></div>
<div class="pt" style="left:1847px;top:777.5px;color:#7e7e7e">100%</div>
<div class="abs" style="left:1658px;top:843px;width:262px;height:211px;background:#4f4f4f"></div>
<div class="abs" style="left:1903px;top:800px;width:17px;height:254px;background:#4b4b4b"></div>
<div class="abs" style="left:1688px;top:803px;width:215px;height:40px;background:#6b6b6b"></div>
<svg style="left:1692px;top:807px" width="24" height="33"><rect width="24" height="33" fill="#2c2c2c"/><use href="#photo" x="1" y="1" width="22" height="31"/></svg>
<div class="pt" style="left:1726px;top:816px;color:#ffffff">背景</div>
<div class="abs" style="left:1658px;top:1053px;width:262px;height:1px;background:#464646"></div>
<svg style="left:0;top:0" width="1920" height="1080">
 <!-- collapse arrows -->
 <g fill="none" stroke="#e0e0e0" stroke-width="1.3">
  <path d="M1645,64 l-2.6,2.6 l2.6,2.6 M1649,64 l-2.6,2.6 l2.6,2.6"/>
  <path d="M1906.5,64 l2.6,2.6 l-2.6,2.6 M1910.5,64 l2.6,2.6 l-2.6,2.6"/>
 </g>
 <!-- grips -->
 <g fill="#3e3e3e">
  <path d="M1627,76h1v4h-1z M1629,76h1v4h-1z M1631,76h1v4h-1z M1633,76h1v4h-1z M1635,76h1v4h-1z M1637,76h1v4h-1z M1639,76h1v4h-1z M1641,76h1v4h-1z M1643,76h1v4h-1z M1645,76h1v4h-1z"/>
  <path d="M1627,145h1v4h-1z M1629,145h1v4h-1z M1631,145h1v4h-1z M1633,145h1v4h-1z M1635,145h1v4h-1z M1637,145h1v4h-1z M1639,145h1v4h-1z M1641,145h1v4h-1z M1643,145h1v4h-1z M1645,145h1v4h-1z"/>
  <path d="M1627,186h1v4h-1z M1629,186h1v4h-1z M1631,186h1v4h-1z M1633,186h1v4h-1z M1635,186h1v4h-1z M1637,186h1v4h-1z M1639,186h1v4h-1z M1641,186h1v4h-1z M1643,186h1v4h-1z M1645,186h1v4h-1z"/>
 </g>
 <!-- brush settings icon -->
 <g fill="#dcdcdc">
  <rect x="1626" y="87.5" width="2" height="1.6"/><rect x="1629.5" y="87.5" width="4" height="1.6"/>
  <rect x="1626" y="90.5" width="2" height="1.6"/><rect x="1629.5" y="90.5" width="4" height="1.6"/>
  <rect x="1626" y="93.5" width="2" height="1.6"/><rect x="1629.5" y="93.5" width="4" height="1.6"/>
  <g transform="translate(1638.5,96) rotate(52)">
   <path d="M-1.2,-11 h2.4 l0.8,9 h-4 z"/><path d="M-2.4,-1 h4.8 c1.6,3 1,6.4 -2.4,9.4 c-3.4,-3 -4,-6.4 -2.4,-9.4 z"/>
  </g>
 </g>
 <!-- brushes icon -->
 <g fill="#dcdcdc">
  <path d="M1626,120 c2,-3 6,-3 8.5,0 c-2.5,3 -6.5,3 -8.5,0 z"/><rect x="1636" y="119" width="9.5" height="2.2"/>
  <rect x="1628" y="126.5" width="10" height="2.2"/><path d="M1638.5,127.6 l6.5,-5 c1.5,3.4 1.5,6.6 0,10 z"/>
 </g>
 <!-- orange crossed brushes -->
 <g stroke="#d8960c" stroke-width="2.2" stroke-linecap="round" fill="#d8960c">
  <path d="M1629.5,160 L1645,175"/><path d="M1642.5,160 L1627,175"/>
  <path d="M1625.5,153.5 c3.5,0.5 5,3 4.6,6.4 c-2.4,1.4 -5.2,0 -5.4,-2.6 c0,-1.4 0.6,-2.6 0.8,-3.8 z" stroke="none"/>
  <path d="M1641.5,157.5 l4.5,-3 l2,3.4 l-3.6,3.8 z" stroke="none" fill="#b07a18"/>
 </g>
 <!-- blue crossed -->
 <g stroke-linecap="round">
  <path d="M1626.5,195.5 L1646.5,216.5" stroke="#2a8cf0" stroke-width="3.2"/>
  <path d="M1646.5,195.5 L1626.5,216.5" stroke="#38a4f4" stroke-width="3.2"/>
 </g>
 <g fill="none" stroke="#9fb4c8" stroke-width="0.9"><rect x="1626.5" y="203.5" width="4.5" height="4.5"/><path d="M1634.5,200 l2,-3.4 l2,3.4 z"/><path d="M1634.8,211.5 h3.2 M1634.8,211.5 v4 M1634.8,213.3 h2.4"/></g>
 <g fill="#c0a080"><circle cx="1643.5" cy="204" r="0.7"/><circle cx="1645" cy="206.5" r="0.7"/><circle cx="1643.5" cy="208.5" r="0.7"/></g>
 <!-- panel menu icons -->
 <g fill="#bdbdbd">
  <path d="M1904,82.6h10v1h-10z M1904,85h10v1h-10z M1904,87.4h10v1h-10z M1904,89.8h10v1h-10z"/>
  <path d="M1904,419.2h10v1h-10z M1904,421.6h10v1h-10z M1904,424h10v1h-10z M1904,426.4h10v1h-10z"/>
  <path d="M1904,691h10v1h-10z M1904,693.4h10v1h-10z M1904,695.8h10v1h-10z M1904,698.2h10v1h-10z"/>
 </g>
 <!-- color swatches -->
 <rect x="1678.5" y="122.5" width="17" height="17" fill="#ffffff" stroke="#444" stroke-width="1"/>
 <rect x="1666.5" y="110.5" width="21" height="21" fill="#444"/>
 <rect x="1667.6" y="111.6" width="18.8" height="18.8" fill="#f20000" stroke="#f4f4f4" stroke-width="1.2"/>
 <path d="M1671.8,157.2 l6.4,11.6 h-12.8 z" fill="#dcdcdc"/>
 <rect x="1671" y="161" width="1.6" height="4" fill="#535353"/><rect x="1671" y="166" width="1.6" height="1.5" fill="#535353"/>
 <rect x="1682.2" y="158.2" width="11.6" height="11.6" fill="#e63030" stroke="#f0f0f0" stroke-width="1.2"/>
 <!-- color field marker -->
 <clipPath id="cfclip"><rect x="1703" y="108" width="164" height="278"/></clipPath>
 <circle cx="1865.4" cy="112.4" r="4.4" fill="none" stroke="#ffffff" stroke-width="1.1" clip-path="url(#cfclip)"/>
 <path d="M1874.5,381 l6.5,4 l-6.5,4 z" fill="#f4f4f4" stroke="#888" stroke-width="0.5"/>
 <!-- vscroll chevrons -->
 <path d="M1603.5,101.5 l3.8,-3.6 l3.8,3.6" fill="none" stroke="#7a7a7a" stroke-width="1.4"/>
 <path d="M1603.5,1050.5 l3.8,3.6 l3.8,-3.6" fill="none" stroke="#7a7a7a" stroke-width="1.4"/>
 <!-- history brush icon -->
 <g fill="#dcdcdc">
  <g transform="translate(1671.5,463.5) rotate(36)"><path d="M-0.9,-8.6 h1.8 l0.5,7.2 h-2.8 z"/><path d="M-1.8,-0.6 h3.6 c1.2,2.4 0.9,4.6 -1.8,6.8 c-2.7,-2.2 -3,-4.4 -1.8,-6.8 z"/></g>
  <path d="M1663,460.6 l2.8,-2.8 v1.9 h3.4 v1.8 h-3.4 v1.9 z"/>
 </g>
 <path d="M1677,463 a4.5,4.5 0 0 1 -3,5.5" fill="none" stroke="#dcdcdc" stroke-width="0.9" stroke-dasharray="1,1.1"/>
 <!-- doc icon -->
 <g fill="none" stroke="#e8e8e8" stroke-width="1.3"><path d="M1690,488.5 h8.5 l4.8,0 v13.6 h-13.3 z"/></g>
 <g fill="#e8e8e8"><rect x="1692" y="491.6" width="9.2" height="1.2"/><rect x="1692" y="494" width="9.2" height="1.2"/><rect x="1692" y="496.4" width="9.2" height="1.2"/><rect x="1692" y="498.8" width="9.2" height="1.2"/></g>
 <!-- history bottom icons -->
 <g fill="#dcdcdc">
  <path d="M1824,661 h4.6 v3.2 h3.2 v8.2 h-7.8 z"/><path d="M1829.4,661 l2.4,2.4 h-2.4 z"/>
  <path d="M1818.2,666.4 h3 v-3 h2.4 v3 h3 v2.4 h-3 v3 h-2.4 v-3 h-3 z" stroke="#535353" stroke-width="0.8"/>
  <path d="M1851,663.6 h3 l1.2,-1.8 h4.4 l1.2,1.8 h3 v8.6 h-12.8 z"/>
 </g>
 <circle cx="1857.4" cy="667.8" r="2.8" fill="#535353"/><circle cx="1857.4" cy="667.8" r="1.5" fill="#dcdcdc"/>
 <g fill="none" stroke="#dcdcdc" stroke-width="1.2"><path d="M1880.2,663.2 h10 M1883.2,663 v-1.6 h4 v1.6 M1881.4,664 l0.5,8.6 h6.6 l0.5,-8.6 M1883.8,665.4 v5.6 M1886.6,665.4 v5.6"/></g>
 <!-- layers: filter row -->
 <g fill="none" stroke="#c4c4c4" stroke-width="1.5"><circle cx="1673.8" cy="728.6" r="3.3"/><path d="M1676.2,731.2 l3.4,3.4" stroke-width="1.8"/></g>
 <path d="M1737.5,728 l3,3 l3,-3" fill="none" stroke="#6a6a6a" stroke-width="1.2"/>
 <g fill="none" stroke="#cfcfcf" stroke-width="1.2"><rect x="1764.4" y="723.2" width="11" height="9.2"/></g>
 <path d="M1765.8,731 l2.6,-4 l2,2.6 l1.6,-1.8 l2.2,3.2 z" fill="#cfcfcf"/>
 <circle cx="1794.6" cy="728.2" r="4.9" fill="none" stroke="#cfcfcf" stroke-width="1.2"/><path d="M1791.1,731.7 a4.9,4.9 0 0 0 7,-7 z" fill="#cfcfcf"/>
 <text x="1818.6" y="733.2" font-family="Liberation Serif, serif" font-weight="bold" font-size="14.5" fill="#cfcfcf" text-anchor="middle">T</text>
 <g fill="none" stroke="#cfcfcf" stroke-width="1.2"><rect x="1838.2" y="724" width="8.8" height="8.8"/></g>
 <g fill="#cfcfcf"><rect x="1836.6" y="722.4" width="3" height="3"/><rect x="1845.6" y="722.4" width="3" height="3"/><rect x="1836.6" y="731.4" width="3" height="3"/><rect x="1845.6" y="731.4" width="3" height="3"/></g>
 <g fill="none" stroke="#cfcfcf" stroke-width="1.1"><path d="M1865,722.8 h4.6 l2.6,2.6 v8.4 h-4"/><path d="M1869.4,722.8 v2.8 h2.8"/></g>
 <rect x="1861.6" y="727.4" width="6" height="6.4" fill="#cfcfcf"/>
 <rect x="1888.6" y="720.4" width="8" height="16.4" rx="4" fill="#484848"/>
 <circle cx="1892.6" cy="724.4" r="4" fill="#9a9a9a"/>
 <!-- blend chevrons -->
 <path d="M1767.5,757 l3,3 l3,-3" fill="none" stroke="#6a6a6a" stroke-width="1.2"/>
 <path d="M1886.5,756 l3,3 l3,-3" fill="none" stroke="#6e6e6e" stroke-width="1.2"/>
 <path d="M1886.5,784.5 l3,3 l3,-3" fill="none" stroke="#6e6e6e" stroke-width="1.2"/>
 <!-- lock row icons -->
 <g fill="#b4b4b4"><rect x="1702" y="780.6" width="11" height="10.6" fill="none" stroke="#b4b4b4" stroke-width="1"/><rect x="1702.6" y="781.2" width="3.4" height="3.3"/><rect x="1709.2" y="781.2" width="3.4" height="3.3"/><rect x="1705.9" y="784.4" width="3.4" height="3.3"/><rect x="1702.6" y="787.4" width="3.4" height="3.3"/><rect x="1709.2" y="787.4" width="3.4" height="3.3"/></g>
 <g fill="#b4b4b4" transform="translate(1730,786) rotate(38)"><path d="M-1,-8.8 h2 l0.6,7.6 h-3.2 z"/><path d="M-2,-0.4 h4 c1.4,2.6 1,5 -2,7.4 c-3,-2.4 -3.4,-4.8 -2,-7.4 z"/></g>
 <g transform="translate(1751.5,786)" fill="#b4b4b4"><rect x="-4.4" y="-0.7" width="8.8" height="1.4"/><rect x="-0.7" y="-4.4" width="1.4" height="8.8"/><path d="M0,-6.6 l2.6,3 h-5.2 z M0,6.6 l2.6,-3 h-5.2 z M-6.6,0 l3,-2.6 v5.2 z M6.6,0 l-3,-2.6 v5.2 z"/></g>
 <g fill="none" stroke="#b4b4b4" stroke-width="1.2"><path d="M1767,782.6 h3 M1771.6,779.6 v11.4 M1767,782.6 M1771.6,782.6 h6.8 v6.6 h-6.8 M1778.4,789.2 v3 M1780,789.2 h1.6" /><path d="M1775.5,780 l3.2,3.2" stroke-dasharray="1,1"/></g>
 <g fill="#b4b4b4"><rect x="1791.2" y="785" width="9.6" height="7" rx="0.8"/></g><path d="M1793.2,785 v-2 a2.8,2.8 0 0 1 5.6,0 v2" fill="none" stroke="#b4b4b4" stroke-width="1.4"/>
 <!-- eye -->
 <path d="M1666.6,824.6 c3.4,-5.6 10.4,-5.6 13.8,0 c-3.4,5.6 -10.4,5.6 -13.8,0 z" fill="#f0f0f0"/><circle cx="1673.5" cy="824.6" r="2.7" fill="#535353"/><circle cx="1673.5" cy="824.6" r="1.2" fill="#f0f0f0"/>
 <!-- layer lock -->
 <rect x="1877.4" y="822.6" width="9.2" height="7" fill="none" stroke="#f0f0f0" stroke-width="1.2"/><path d="M1879.4,822.6 v-1.6 a2.6,2.6 0 0 1 5.2,0 v1.6" fill="none" stroke="#f0f0f0" stroke-width="1.2"/><rect x="1881.3" y="825.4" width="1.6" height="1.8" fill="#f0f0f0"/>
 <!-- layers bottom icons -->
 <g fill="none" stroke="#8e8e8e" stroke-width="1.3"><rect x="1717.6" y="1064" width="7.4" height="5.6" rx="2.8"/><rect x="1723.4" y="1064" width="7.4" height="5.6" rx="2.8"/></g>
 <text x="1746" y="1071" font-family="Liberation Serif, serif" font-style="italic" font-size="13.5" fill="#8e8e8e">fx</text>
 <rect x="1771.2" y="1061.8" width="13.4" height="10" fill="#e4e4e4"/><circle cx="1777.9" cy="1066.8" r="3.2" fill="#535353"/>
 <circle cx="1805.4" cy="1066.8" r="5.3" fill="none" stroke="#e4e4e4" stroke-width="1.2"/><path d="M1801.6,1070.6 a5.3,5.3 0 0 0 7.5,-7.5 z" fill="#e4e4e4"/><path d="M1810,1072.5 h3 l-1.5,1.6 z" fill="#e4e4e4"/>
 <path d="M1826,1062.6 h4.6 l1.4,1.6 h6.4 v8 h-12.4 z" fill="#dcdcdc"/>
 <rect x="1854" y="1061.6" width="10.6" height="10.6" fill="none" stroke="#e4e4e4" stroke-width="1.2"/><path d="M1859.3,1064 v5.8 M1856.4,1066.9 h5.8" stroke="#e4e4e4" stroke-width="1.2"/>
 <g fill="none" stroke="#8e8e8e" stroke-width="1.2"><path d="M1880.2,1062.6 h10 M1883.2,1062.4 v-1.6 h4 v1.6 M1881.4,1063.4 l0.5,9 h6.6 l0.5,-9 M1883.8,1065 v5.8 M1886.6,1065 v5.8"/></g>
</svg>
<!-- watermark -->
<style>
.wm{position:absolute;white-space:nowrap;color:#fff;line-height:60px;height:60px;text-shadow:1px 1px 0 #000,2px 2px 0 #000,3px 3px 0 #000,3.5px 3.5px 1px rgba(0,0,0,.7)}
</style>
<div class="wm" id="wm1" style="left:1315px;top:987px;font-size:50px;font-weight:900;font-family:'Noto Sans CJK SC',sans-serif;letter-spacing:-1.5px">头条</div>
<div class="wm" id="wm2" style="left:1419px;top:991px;font-size:57px;font-family:'Liberation Sans',sans-serif;-webkit-text-stroke:0.5px #fff;transform:scaleX(1.08);transform-origin:left center">@</div>
<div class="wm" id="wm3" style="left:1473px;top:990px;font-size:50px;font-weight:500;font-family:'Noto Sans CJK SC',sans-serif;letter-spacing:-1.7px">追梦人</div>
<div class="wm" id="wm4" style="left:1619px;top:990px;font-size:54px;font-family:'Liberation Sans',sans-serif;-webkit-text-stroke:0.6px #fff;letter-spacing:-0.9px">215041837</div>

</body>
</html>
